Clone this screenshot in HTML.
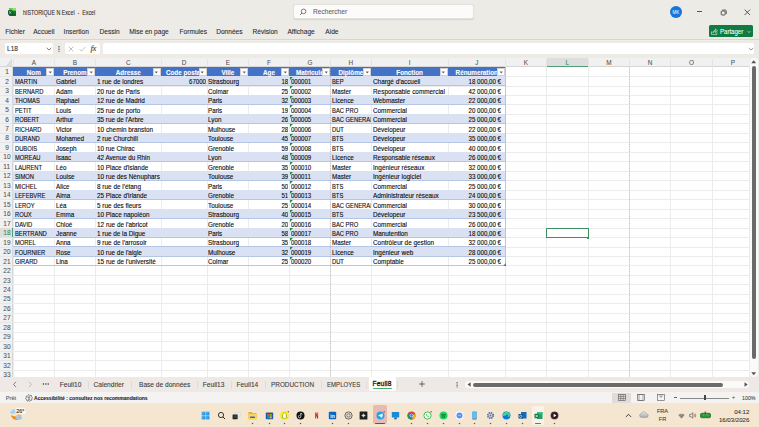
<!DOCTYPE html><html><head><meta charset="utf-8"><style>
*{margin:0;padding:0;box-sizing:border-box}
html,body{width:759px;height:427px;overflow:hidden;background:#efeae6;font-family:"Liberation Sans",sans-serif}
.ab{position:absolute}
.t{position:absolute;white-space:nowrap;line-height:1;-webkit-text-stroke:0.08px currentColor}
.cell{position:absolute;white-space:nowrap;overflow:hidden;font-size:6.45px;line-height:1;height:9px;color:#0a0a0a;-webkit-text-stroke:0.11px currentColor}
</style></head><body>

<div class="ab" style="left:0;top:0;width:759px;height:57.6px;background:linear-gradient(90deg,#efeae6 0px,#eeebe7 150px,#ecebe6 300px,#ecebe6 759px)"></div>
<svg class="ab" style="left:7.6px;top:7.9px" width="8" height="8" viewBox="0 0 8 8">
<rect x="1.2" y="0" width="6.8" height="8" rx="0.9" fill="#0f7a35"/>
<rect x="1.2" y="0" width="6.8" height="2.6" rx="0.9" fill="#5ccf4e"/>
<rect x="4.6" y="0" width="3.4" height="2.6" rx="0.6" fill="#9be36c"/>
<rect x="1.2" y="5.3" width="6.8" height="2.7" rx="0.9" fill="#0b6a2c"/>
<rect x="0" y="2.3" width="4.4" height="4.4" rx="0.6" fill="#0a5427"/>
<path d="M1.2 3.3 L3.2 5.7 M3.2 3.3 L1.2 5.7" stroke="#e8f5ec" stroke-width="0.7"/>
</svg>
<div class="t" style="left:23px;top:9.6px;font-size:6.3px;transform:scaleX(0.84);transform-origin:0 0;color:#2b2b2b">hISTORIQUE N Excel&nbsp; -&nbsp; Excel</div>
<div class="ab" style="left:292.6px;top:3.9px;width:181.6px;height:15.5px;background:#fcfbfa;border:0.5px solid #e4e1de;border-radius:2.5px;box-shadow:0 0.6px 0.8px rgba(0,0,0,0.10)"></div>
<svg class="ab" style="left:299px;top:8px" width="8" height="8" viewBox="0 0 8 8"><circle cx="4.6" cy="3.4" r="2.3" fill="none" stroke="#5a5a5a" stroke-width="0.8"/><line x1="3" y1="5" x2="1" y2="7" stroke="#5a5a5a" stroke-width="0.8"/></svg>
<div class="t" style="left:313px;top:9.1px;font-size:6.6px;color:#5f5f5f">Rechercher</div>
<div class="ab" style="left:669.8px;top:5.9px;width:12.2px;height:12.2px;border-radius:50%;background:#1a73d9"></div>
<div class="t" style="left:669.8px;top:10.5px;width:12.2px;text-align:center;font-size:4.5px;color:#fff;-webkit-text-stroke:0">MK</div>
<div class="ab" style="left:697.2px;top:11.3px;width:4.8px;height:0.6px;background:#555"></div>
<svg class="ab" style="left:719px;top:8px" width="9" height="9" viewBox="0 0 9 9"><rect x="2.2" y="3" width="4" height="4" rx="0.8" fill="none" stroke="#333" stroke-width="0.8"/><path d="M3.3 2 H6.3 a1 1 0 0 1 1 1 V6" fill="none" stroke="#333" stroke-width="0.7"/></svg>
<svg class="ab" style="left:743px;top:8px" width="9" height="9" viewBox="0 0 9 9"><path d="M1.6 1.6 L7 7 M7 1.6 L1.6 7" stroke="#333" stroke-width="0.8"/></svg>
<div class="t" style="left:5.2px;top:28.9px;font-size:6.6px;color:#2a2a2a">Fichier</div>
<div class="t" style="left:33.2px;top:28.9px;font-size:6.6px;color:#2a2a2a">Accueil</div>
<div class="t" style="left:63.6px;top:28.9px;font-size:6.6px;color:#2a2a2a">Insertion</div>
<div class="t" style="left:99.6px;top:28.9px;font-size:6.6px;color:#2a2a2a">Dessin</div>
<div class="t" style="left:129.2px;top:28.9px;font-size:6.6px;color:#2a2a2a">Mise en page</div>
<div class="t" style="left:179.5px;top:28.9px;font-size:6.6px;color:#2a2a2a">Formules</div>
<div class="t" style="left:216.2px;top:28.9px;font-size:6.6px;color:#2a2a2a">Données</div>
<div class="t" style="left:252.5px;top:28.9px;font-size:6.6px;color:#2a2a2a">Révision</div>
<div class="t" style="left:287.4px;top:28.9px;font-size:6.6px;color:#2a2a2a">Affichage</div>
<div class="t" style="left:325.3px;top:28.9px;font-size:6.6px;color:#2a2a2a">Aide</div>
<div class="ab" style="left:709.3px;top:25.4px;width:43.6px;height:11.4px;background:#107c41;border-radius:1.5px"></div>
<svg class="ab" style="left:711px;top:27.6px" width="7" height="7" viewBox="0 0 7 7"><path d="M0.5 3.5 V6.4 H6 V4.6 M2 4.8 C2 3.2 3 2.3 4.5 2.3 V1 L6.5 2.8 L4.5 4.6 V3.4 C3.3 3.4 2.6 3.9 2 4.8Z" fill="none" stroke="#fff" stroke-width="0.55"/></svg>
<div class="t" style="left:719.7px;top:28.5px;font-size:6.5px;color:#fff;transform:scaleX(0.93);transform-origin:0 0">Partager</div>
<svg class="ab" style="left:747px;top:29.5px" width="4" height="4" viewBox="0 0 4 4"><path d="M0.6 1.2 L2 2.6 L3.4 1.2" fill="none" stroke="#fff" stroke-width="0.6"/></svg>
<div class="ab" style="left:0;top:38.5px;width:759px;height:1px;background:#d9d6d2"></div>
<div class="ab" style="left:4.7px;top:43.1px;width:48.6px;height:10.8px;background:#fff;border-radius:1.5px"></div>
<div class="t" style="left:7.1px;top:45.6px;font-size:6.5px;color:#2a2a2a">L18</div>
<svg class="ab" style="left:46px;top:46.8px" width="6" height="4" viewBox="0 0 6 4"><path d="M0.6 0.8 L3 3 L5.4 0.8" fill="none" stroke="#444" stroke-width="0.7"/></svg>
<svg class="ab" style="left:58px;top:45.8px" width="2" height="6" viewBox="0 0 2 6"><path d="M1 0 V6" stroke="#7a7a7a" stroke-width="1.5" stroke-dasharray="1 0.55"/></svg>
<div class="ab" style="left:64.8px;top:43.1px;width:35.1px;height:10.8px;background:#fff;border-radius:1.5px"></div>
<svg class="ab" style="left:67.5px;top:45.5px" width="6" height="6" viewBox="0 0 6 6"><path d="M0.6 0.6 L5.4 5.4 M5.4 0.6 L0.6 5.4" stroke="#999" stroke-width="0.6"/></svg>
<svg class="ab" style="left:78.8px;top:45.5px" width="7" height="6" viewBox="0 0 7 6"><path d="M0.6 3.2 L2.5 5.2 L6.4 0.8" fill="none" stroke="#999" stroke-width="0.6"/></svg>
<div class="t" style="left:90.6px;top:44.2px;font-size:8.6px;color:#333;font-family:'Liberation Serif',serif;font-style:italic;letter-spacing:-0.4px">fx</div>
<div class="ab" style="left:102.8px;top:43.3px;width:651.4px;height:10.9px;background:#fff;border-radius:1.5px"></div>
<svg class="ab" style="left:747.8px;top:46.5px" width="6" height="4" viewBox="0 0 6 4"><path d="M0.8 1 L3 3 L5.2 1" fill="none" stroke="#555" stroke-width="0.6"/></svg>
<div class="ab" style="left:0;top:57.6px;width:749.3px;height:319.4px;background:#fff"></div>
<div class="ab" style="left:0;top:57.6px;width:749.3px;height:9.399999999999999px;background:#f1f1f1;border-bottom:0.8px solid #d6d6d6"></div>
<div class="ab" style="left:0;top:67.0px;width:13.2px;height:310.0px;background:#f1f1f1;border-right:0.8px solid #d6d6d6"></div>
<svg class="ab" style="left:0;top:57.6px" width="13" height="10" viewBox="0 0 13 10"><path d="M12 0.3 L12 8.2 L5.8 8.2 Z" fill="#dcdcdc"/></svg>
<div class="ab" style="left:12.80px;top:67.0px;width:0.8px;height:310.0px;background:#ececec"></div>
<div class="ab" style="left:12.80px;top:59.1px;width:0.6px;height:7.899999999999999px;background:#e4e4e4"></div>
<div class="ab" style="left:54.00px;top:67.0px;width:0.8px;height:310.0px;background:#ececec"></div>
<div class="ab" style="left:54.00px;top:59.1px;width:0.6px;height:7.899999999999999px;background:#e4e4e4"></div>
<div class="ab" style="left:95.10px;top:67.0px;width:0.8px;height:310.0px;background:#ececec"></div>
<div class="ab" style="left:95.10px;top:59.1px;width:0.6px;height:7.899999999999999px;background:#e4e4e4"></div>
<div class="ab" style="left:160.60px;top:67.0px;width:0.8px;height:310.0px;background:#ececec"></div>
<div class="ab" style="left:160.60px;top:59.1px;width:0.6px;height:7.899999999999999px;background:#e4e4e4"></div>
<div class="ab" style="left:206.60px;top:67.0px;width:0.8px;height:310.0px;background:#ececec"></div>
<div class="ab" style="left:206.60px;top:59.1px;width:0.6px;height:7.899999999999999px;background:#e4e4e4"></div>
<div class="ab" style="left:248.35px;top:67.0px;width:0.8px;height:310.0px;background:#ececec"></div>
<div class="ab" style="left:248.35px;top:59.1px;width:0.6px;height:7.899999999999999px;background:#e4e4e4"></div>
<div class="ab" style="left:288.85px;top:67.0px;width:0.8px;height:310.0px;background:#ececec"></div>
<div class="ab" style="left:288.85px;top:59.1px;width:0.6px;height:7.899999999999999px;background:#e4e4e4"></div>
<div class="ab" style="left:330.10px;top:67.0px;width:0.8px;height:310.0px;background:#ececec"></div>
<div class="ab" style="left:330.10px;top:59.1px;width:0.6px;height:7.899999999999999px;background:#e4e4e4"></div>
<div class="ab" style="left:370.85px;top:67.0px;width:0.8px;height:310.0px;background:#ececec"></div>
<div class="ab" style="left:370.85px;top:59.1px;width:0.6px;height:7.899999999999999px;background:#e4e4e4"></div>
<div class="ab" style="left:447.60px;top:67.0px;width:0.8px;height:310.0px;background:#ececec"></div>
<div class="ab" style="left:447.60px;top:59.1px;width:0.6px;height:7.899999999999999px;background:#e4e4e4"></div>
<div class="ab" style="left:505.10px;top:67.0px;width:0.8px;height:310.0px;background:#ececec"></div>
<div class="ab" style="left:505.10px;top:59.1px;width:0.6px;height:7.899999999999999px;background:#e4e4e4"></div>
<div class="ab" style="left:546.10px;top:67.0px;width:0.8px;height:310.0px;background:#ececec"></div>
<div class="ab" style="left:546.10px;top:59.1px;width:0.6px;height:7.899999999999999px;background:#e4e4e4"></div>
<div class="ab" style="left:587.90px;top:67.0px;width:0.8px;height:310.0px;background:#ececec"></div>
<div class="ab" style="left:587.90px;top:59.1px;width:0.6px;height:7.899999999999999px;background:#e4e4e4"></div>
<div class="ab" style="left:628.90px;top:67.0px;width:0.8px;height:310.0px;background:#ececec"></div>
<div class="ab" style="left:628.90px;top:59.1px;width:0.6px;height:7.899999999999999px;background:#e4e4e4"></div>
<div class="ab" style="left:670.40px;top:67.0px;width:0.8px;height:310.0px;background:#ececec"></div>
<div class="ab" style="left:670.40px;top:59.1px;width:0.6px;height:7.899999999999999px;background:#e4e4e4"></div>
<div class="ab" style="left:711.90px;top:67.0px;width:0.8px;height:310.0px;background:#ececec"></div>
<div class="ab" style="left:711.90px;top:59.1px;width:0.6px;height:7.899999999999999px;background:#e4e4e4"></div>
<div class="ab" style="left:13.2px;top:76.07px;width:736.10px;height:0.8px;background:#ececec"></div>
<div class="ab" style="left:0;top:76.07px;width:13.2px;height:0.8px;background:#e6e6e6"></div>
<div class="ab" style="left:13.2px;top:85.54px;width:736.10px;height:0.8px;background:#ececec"></div>
<div class="ab" style="left:0;top:85.54px;width:13.2px;height:0.8px;background:#e6e6e6"></div>
<div class="ab" style="left:13.2px;top:95.01px;width:736.10px;height:0.8px;background:#ececec"></div>
<div class="ab" style="left:0;top:95.01px;width:13.2px;height:0.8px;background:#e6e6e6"></div>
<div class="ab" style="left:13.2px;top:104.48px;width:736.10px;height:0.8px;background:#ececec"></div>
<div class="ab" style="left:0;top:104.48px;width:13.2px;height:0.8px;background:#e6e6e6"></div>
<div class="ab" style="left:13.2px;top:113.95px;width:736.10px;height:0.8px;background:#ececec"></div>
<div class="ab" style="left:0;top:113.95px;width:13.2px;height:0.8px;background:#e6e6e6"></div>
<div class="ab" style="left:13.2px;top:123.42px;width:736.10px;height:0.8px;background:#ececec"></div>
<div class="ab" style="left:0;top:123.42px;width:13.2px;height:0.8px;background:#e6e6e6"></div>
<div class="ab" style="left:13.2px;top:132.89px;width:736.10px;height:0.8px;background:#ececec"></div>
<div class="ab" style="left:0;top:132.89px;width:13.2px;height:0.8px;background:#e6e6e6"></div>
<div class="ab" style="left:13.2px;top:142.36px;width:736.10px;height:0.8px;background:#ececec"></div>
<div class="ab" style="left:0;top:142.36px;width:13.2px;height:0.8px;background:#e6e6e6"></div>
<div class="ab" style="left:13.2px;top:151.83px;width:736.10px;height:0.8px;background:#ececec"></div>
<div class="ab" style="left:0;top:151.83px;width:13.2px;height:0.8px;background:#e6e6e6"></div>
<div class="ab" style="left:13.2px;top:161.30px;width:736.10px;height:0.8px;background:#ececec"></div>
<div class="ab" style="left:0;top:161.30px;width:13.2px;height:0.8px;background:#e6e6e6"></div>
<div class="ab" style="left:13.2px;top:170.77px;width:736.10px;height:0.8px;background:#ececec"></div>
<div class="ab" style="left:0;top:170.77px;width:13.2px;height:0.8px;background:#e6e6e6"></div>
<div class="ab" style="left:13.2px;top:180.24px;width:736.10px;height:0.8px;background:#ececec"></div>
<div class="ab" style="left:0;top:180.24px;width:13.2px;height:0.8px;background:#e6e6e6"></div>
<div class="ab" style="left:13.2px;top:189.71px;width:736.10px;height:0.8px;background:#ececec"></div>
<div class="ab" style="left:0;top:189.71px;width:13.2px;height:0.8px;background:#e6e6e6"></div>
<div class="ab" style="left:13.2px;top:199.18px;width:736.10px;height:0.8px;background:#ececec"></div>
<div class="ab" style="left:0;top:199.18px;width:13.2px;height:0.8px;background:#e6e6e6"></div>
<div class="ab" style="left:13.2px;top:208.65px;width:736.10px;height:0.8px;background:#ececec"></div>
<div class="ab" style="left:0;top:208.65px;width:13.2px;height:0.8px;background:#e6e6e6"></div>
<div class="ab" style="left:13.2px;top:218.12px;width:736.10px;height:0.8px;background:#ececec"></div>
<div class="ab" style="left:0;top:218.12px;width:13.2px;height:0.8px;background:#e6e6e6"></div>
<div class="ab" style="left:13.2px;top:227.59px;width:736.10px;height:0.8px;background:#ececec"></div>
<div class="ab" style="left:0;top:227.59px;width:13.2px;height:0.8px;background:#e6e6e6"></div>
<div class="ab" style="left:13.2px;top:237.06px;width:736.10px;height:0.8px;background:#ececec"></div>
<div class="ab" style="left:0;top:237.06px;width:13.2px;height:0.8px;background:#e6e6e6"></div>
<div class="ab" style="left:13.2px;top:246.53px;width:736.10px;height:0.8px;background:#ececec"></div>
<div class="ab" style="left:0;top:246.53px;width:13.2px;height:0.8px;background:#e6e6e6"></div>
<div class="ab" style="left:13.2px;top:256.00px;width:736.10px;height:0.8px;background:#ececec"></div>
<div class="ab" style="left:0;top:256.00px;width:13.2px;height:0.8px;background:#e6e6e6"></div>
<div class="ab" style="left:13.2px;top:265.47px;width:736.10px;height:0.8px;background:#ececec"></div>
<div class="ab" style="left:0;top:265.47px;width:13.2px;height:0.8px;background:#e6e6e6"></div>
<div class="ab" style="left:13.2px;top:274.94px;width:736.10px;height:0.8px;background:#ececec"></div>
<div class="ab" style="left:0;top:274.94px;width:13.2px;height:0.8px;background:#e6e6e6"></div>
<div class="ab" style="left:13.2px;top:284.41px;width:736.10px;height:0.8px;background:#ececec"></div>
<div class="ab" style="left:0;top:284.41px;width:13.2px;height:0.8px;background:#e6e6e6"></div>
<div class="ab" style="left:13.2px;top:293.88px;width:736.10px;height:0.8px;background:#ececec"></div>
<div class="ab" style="left:0;top:293.88px;width:13.2px;height:0.8px;background:#e6e6e6"></div>
<div class="ab" style="left:13.2px;top:303.35px;width:736.10px;height:0.8px;background:#ececec"></div>
<div class="ab" style="left:0;top:303.35px;width:13.2px;height:0.8px;background:#e6e6e6"></div>
<div class="ab" style="left:13.2px;top:312.82px;width:736.10px;height:0.8px;background:#ececec"></div>
<div class="ab" style="left:0;top:312.82px;width:13.2px;height:0.8px;background:#e6e6e6"></div>
<div class="ab" style="left:13.2px;top:322.29px;width:736.10px;height:0.8px;background:#ececec"></div>
<div class="ab" style="left:0;top:322.29px;width:13.2px;height:0.8px;background:#e6e6e6"></div>
<div class="ab" style="left:13.2px;top:331.76px;width:736.10px;height:0.8px;background:#ececec"></div>
<div class="ab" style="left:0;top:331.76px;width:13.2px;height:0.8px;background:#e6e6e6"></div>
<div class="ab" style="left:13.2px;top:341.23px;width:736.10px;height:0.8px;background:#ececec"></div>
<div class="ab" style="left:0;top:341.23px;width:13.2px;height:0.8px;background:#e6e6e6"></div>
<div class="ab" style="left:13.2px;top:350.70px;width:736.10px;height:0.8px;background:#ececec"></div>
<div class="ab" style="left:0;top:350.70px;width:13.2px;height:0.8px;background:#e6e6e6"></div>
<div class="ab" style="left:13.2px;top:360.17px;width:736.10px;height:0.8px;background:#ececec"></div>
<div class="ab" style="left:0;top:360.17px;width:13.2px;height:0.8px;background:#e6e6e6"></div>
<div class="ab" style="left:13.2px;top:369.64px;width:736.10px;height:0.8px;background:#ececec"></div>
<div class="ab" style="left:0;top:369.64px;width:13.2px;height:0.8px;background:#e6e6e6"></div>
<div class="t" style="left:13.2px;top:59.9px;width:41.20px;text-align:center;font-size:6.4px;color:#555">A</div>
<div class="t" style="left:54.4px;top:59.9px;width:41.10px;text-align:center;font-size:6.4px;color:#555">B</div>
<div class="t" style="left:95.5px;top:59.9px;width:65.50px;text-align:center;font-size:6.4px;color:#555">C</div>
<div class="t" style="left:161.0px;top:59.9px;width:46.00px;text-align:center;font-size:6.4px;color:#555">D</div>
<div class="t" style="left:207.0px;top:59.9px;width:41.75px;text-align:center;font-size:6.4px;color:#555">E</div>
<div class="t" style="left:248.75px;top:59.9px;width:40.50px;text-align:center;font-size:6.4px;color:#555">F</div>
<div class="t" style="left:289.25px;top:59.9px;width:41.25px;text-align:center;font-size:6.4px;color:#555">G</div>
<div class="t" style="left:330.5px;top:59.9px;width:40.75px;text-align:center;font-size:6.4px;color:#555">H</div>
<div class="t" style="left:371.25px;top:59.9px;width:76.75px;text-align:center;font-size:6.4px;color:#555">I</div>
<div class="t" style="left:448.0px;top:59.9px;width:57.50px;text-align:center;font-size:6.4px;color:#555">J</div>
<div class="t" style="left:505.5px;top:59.9px;width:41.00px;text-align:center;font-size:6.4px;color:#555">K</div>
<div class="ab" style="left:546.5px;top:57.6px;width:41.80px;height:9.399999999999999px;background:#dedede;border-bottom:1.5px solid #4f9f73"></div>
<div class="t" style="left:546.5px;top:59.9px;width:41.80px;text-align:center;font-size:6.4px;color:#2f8a58">L</div>
<div class="t" style="left:588.3px;top:59.9px;width:41.00px;text-align:center;font-size:6.4px;color:#555">M</div>
<div class="t" style="left:629.3px;top:59.9px;width:41.50px;text-align:center;font-size:6.4px;color:#555">N</div>
<div class="t" style="left:670.8px;top:59.9px;width:41.50px;text-align:center;font-size:6.4px;color:#555">O</div>
<div class="t" style="left:712.3px;top:59.9px;width:41.20px;text-align:center;font-size:6.4px;color:#555">P</div>
<div class="t" style="left:0;top:69.20px;width:13.70px;text-align:center;font-size:7.1px;color:#555"><span style="display:inline-block;transform:scaleX(0.92)">1</span></div>
<div class="t" style="left:0;top:78.67px;width:13.70px;text-align:center;font-size:7.1px;color:#555"><span style="display:inline-block;transform:scaleX(0.92)">2</span></div>
<div class="t" style="left:0;top:88.14px;width:13.70px;text-align:center;font-size:7.1px;color:#555"><span style="display:inline-block;transform:scaleX(0.92)">3</span></div>
<div class="t" style="left:0;top:97.61px;width:13.70px;text-align:center;font-size:7.1px;color:#555"><span style="display:inline-block;transform:scaleX(0.92)">4</span></div>
<div class="t" style="left:0;top:107.08px;width:13.70px;text-align:center;font-size:7.1px;color:#555"><span style="display:inline-block;transform:scaleX(0.92)">5</span></div>
<div class="t" style="left:0;top:116.55px;width:13.70px;text-align:center;font-size:7.1px;color:#555"><span style="display:inline-block;transform:scaleX(0.92)">6</span></div>
<div class="t" style="left:0;top:126.02px;width:13.70px;text-align:center;font-size:7.1px;color:#555"><span style="display:inline-block;transform:scaleX(0.92)">7</span></div>
<div class="t" style="left:0;top:135.49px;width:13.70px;text-align:center;font-size:7.1px;color:#555"><span style="display:inline-block;transform:scaleX(0.92)">8</span></div>
<div class="t" style="left:0;top:144.96px;width:13.70px;text-align:center;font-size:7.1px;color:#555"><span style="display:inline-block;transform:scaleX(0.92)">9</span></div>
<div class="t" style="left:0;top:154.43px;width:13.70px;text-align:center;font-size:7.1px;color:#555"><span style="display:inline-block;transform:scaleX(0.92)">10</span></div>
<div class="t" style="left:0;top:163.90px;width:13.70px;text-align:center;font-size:7.1px;color:#555"><span style="display:inline-block;transform:scaleX(0.92)">11</span></div>
<div class="t" style="left:0;top:173.37px;width:13.70px;text-align:center;font-size:7.1px;color:#555"><span style="display:inline-block;transform:scaleX(0.92)">12</span></div>
<div class="t" style="left:0;top:182.84px;width:13.70px;text-align:center;font-size:7.1px;color:#555"><span style="display:inline-block;transform:scaleX(0.92)">13</span></div>
<div class="t" style="left:0;top:192.31px;width:13.70px;text-align:center;font-size:7.1px;color:#555"><span style="display:inline-block;transform:scaleX(0.92)">14</span></div>
<div class="t" style="left:0;top:201.78px;width:13.70px;text-align:center;font-size:7.1px;color:#555"><span style="display:inline-block;transform:scaleX(0.92)">15</span></div>
<div class="t" style="left:0;top:211.25px;width:13.70px;text-align:center;font-size:7.1px;color:#555"><span style="display:inline-block;transform:scaleX(0.92)">16</span></div>
<div class="t" style="left:0;top:220.72px;width:13.70px;text-align:center;font-size:7.1px;color:#555"><span style="display:inline-block;transform:scaleX(0.92)">17</span></div>
<div class="ab" style="left:0;top:227.99px;width:13.2px;height:9.47px;background:#dedede;border-right:1.6px solid #4f9f73"></div>
<div class="t" style="left:0;top:230.19px;width:13.70px;text-align:center;font-size:7.1px;color:#2f8a58"><span style="display:inline-block;transform:scaleX(0.92)">18</span></div>
<div class="t" style="left:0;top:239.66px;width:13.70px;text-align:center;font-size:7.1px;color:#555"><span style="display:inline-block;transform:scaleX(0.92)">19</span></div>
<div class="t" style="left:0;top:249.13px;width:13.70px;text-align:center;font-size:7.1px;color:#555"><span style="display:inline-block;transform:scaleX(0.92)">20</span></div>
<div class="t" style="left:0;top:258.60px;width:13.70px;text-align:center;font-size:7.1px;color:#555"><span style="display:inline-block;transform:scaleX(0.92)">21</span></div>
<div class="t" style="left:0;top:268.07px;width:13.70px;text-align:center;font-size:7.1px;color:#555"><span style="display:inline-block;transform:scaleX(0.92)">22</span></div>
<div class="t" style="left:0;top:277.54px;width:13.70px;text-align:center;font-size:7.1px;color:#555"><span style="display:inline-block;transform:scaleX(0.92)">23</span></div>
<div class="t" style="left:0;top:287.01px;width:13.70px;text-align:center;font-size:7.1px;color:#555"><span style="display:inline-block;transform:scaleX(0.92)">24</span></div>
<div class="t" style="left:0;top:296.48px;width:13.70px;text-align:center;font-size:7.1px;color:#555"><span style="display:inline-block;transform:scaleX(0.92)">25</span></div>
<div class="t" style="left:0;top:305.95px;width:13.70px;text-align:center;font-size:7.1px;color:#555"><span style="display:inline-block;transform:scaleX(0.92)">26</span></div>
<div class="t" style="left:0;top:315.42px;width:13.70px;text-align:center;font-size:7.1px;color:#555"><span style="display:inline-block;transform:scaleX(0.92)">27</span></div>
<div class="t" style="left:0;top:324.89px;width:13.70px;text-align:center;font-size:7.1px;color:#555"><span style="display:inline-block;transform:scaleX(0.92)">28</span></div>
<div class="t" style="left:0;top:334.36px;width:13.70px;text-align:center;font-size:7.1px;color:#555"><span style="display:inline-block;transform:scaleX(0.92)">29</span></div>
<div class="t" style="left:0;top:343.83px;width:13.70px;text-align:center;font-size:7.1px;color:#555"><span style="display:inline-block;transform:scaleX(0.92)">30</span></div>
<div class="t" style="left:0;top:353.30px;width:13.70px;text-align:center;font-size:7.1px;color:#555"><span style="display:inline-block;transform:scaleX(0.92)">31</span></div>
<div class="t" style="left:0;top:362.77px;width:13.70px;text-align:center;font-size:7.1px;color:#555"><span style="display:inline-block;transform:scaleX(0.92)">32</span></div>
<div class="t" style="left:0;top:372.24px;width:13.70px;text-align:center;font-size:7.1px;color:#555"><span style="display:inline-block;transform:scaleX(0.92)">33</span></div>
<div class="ab" style="left:13.2px;top:67.0px;width:492.30px;height:9.47px;background:#4472c4"></div>
<div class="ab" style="left:13.2px;top:76.47px;width:492.30px;height:9.47px;background:#d9e1f2"></div>
<div class="ab" style="left:13.2px;top:85.49px;width:492.30px;height:0.9px;background:#b4c6e7"></div>
<div class="ab" style="left:13.2px;top:94.96px;width:492.30px;height:0.9px;background:#b4c6e7"></div>
<div class="ab" style="left:13.2px;top:95.41px;width:492.30px;height:9.47px;background:#d9e1f2"></div>
<div class="ab" style="left:13.2px;top:104.43px;width:492.30px;height:0.9px;background:#b4c6e7"></div>
<div class="ab" style="left:13.2px;top:113.90px;width:492.30px;height:0.9px;background:#b4c6e7"></div>
<div class="ab" style="left:13.2px;top:114.35px;width:492.30px;height:9.47px;background:#d9e1f2"></div>
<div class="ab" style="left:13.2px;top:123.37px;width:492.30px;height:0.9px;background:#b4c6e7"></div>
<div class="ab" style="left:13.2px;top:132.84px;width:492.30px;height:0.9px;background:#b4c6e7"></div>
<div class="ab" style="left:13.2px;top:133.29000000000002px;width:492.30px;height:9.47px;background:#d9e1f2"></div>
<div class="ab" style="left:13.2px;top:142.31px;width:492.30px;height:0.9px;background:#b4c6e7"></div>
<div class="ab" style="left:13.2px;top:151.78px;width:492.30px;height:0.9px;background:#b4c6e7"></div>
<div class="ab" style="left:13.2px;top:152.23000000000002px;width:492.30px;height:9.47px;background:#d9e1f2"></div>
<div class="ab" style="left:13.2px;top:161.25px;width:492.30px;height:0.9px;background:#b4c6e7"></div>
<div class="ab" style="left:13.2px;top:170.72px;width:492.30px;height:0.9px;background:#b4c6e7"></div>
<div class="ab" style="left:13.2px;top:171.17000000000002px;width:492.30px;height:9.47px;background:#d9e1f2"></div>
<div class="ab" style="left:13.2px;top:180.19px;width:492.30px;height:0.9px;background:#b4c6e7"></div>
<div class="ab" style="left:13.2px;top:189.66px;width:492.30px;height:0.9px;background:#b4c6e7"></div>
<div class="ab" style="left:13.2px;top:190.11px;width:492.30px;height:9.47px;background:#d9e1f2"></div>
<div class="ab" style="left:13.2px;top:199.13px;width:492.30px;height:0.9px;background:#b4c6e7"></div>
<div class="ab" style="left:13.2px;top:208.60px;width:492.30px;height:0.9px;background:#b4c6e7"></div>
<div class="ab" style="left:13.2px;top:209.05px;width:492.30px;height:9.47px;background:#d9e1f2"></div>
<div class="ab" style="left:13.2px;top:218.07px;width:492.30px;height:0.9px;background:#b4c6e7"></div>
<div class="ab" style="left:13.2px;top:227.54px;width:492.30px;height:0.9px;background:#b4c6e7"></div>
<div class="ab" style="left:13.2px;top:227.99px;width:492.30px;height:9.47px;background:#d9e1f2"></div>
<div class="ab" style="left:13.2px;top:237.01px;width:492.30px;height:0.9px;background:#b4c6e7"></div>
<div class="ab" style="left:13.2px;top:246.48px;width:492.30px;height:0.9px;background:#b4c6e7"></div>
<div class="ab" style="left:13.2px;top:246.93px;width:492.30px;height:9.47px;background:#d9e1f2"></div>
<div class="ab" style="left:13.2px;top:255.95px;width:492.30px;height:0.9px;background:#b4c6e7"></div>
<div class="ab" style="left:13.2px;top:265.42px;width:492.30px;height:0.9px;background:#b4c6e7"></div>
<div class="ab" style="left:505.00px;top:67.0px;width:0.9px;height:198.87px;background:#b4c6e7"></div>
<div class="cell" style="left:13.2px;top:70.00px;width:41.20px;text-align:center;font-weight:bold;color:#fff;font-size:6.3px">Nom</div>
<div class="ab" style="left:46.10px;top:67.80px;width:7.9px;height:7.9px;background:#fff;border:0.5px solid #d0d0d0"></div>
<svg class="ab" style="left:47.80px;top:70.60px" width="4.5" height="3" viewBox="0 0 4.5 3"><path d="M0.6 0.5 H3.9 L2.25 2.4Z" fill="#666"/></svg>
<div class="cell" style="left:54.4px;top:70.00px;width:41.10px;text-align:center;font-weight:bold;color:#fff;font-size:6.3px">Prenom</div>
<div class="ab" style="left:87.20px;top:67.80px;width:7.9px;height:7.9px;background:#fff;border:0.5px solid #d0d0d0"></div>
<svg class="ab" style="left:88.90px;top:70.60px" width="4.5" height="3" viewBox="0 0 4.5 3"><path d="M0.6 0.5 H3.9 L2.25 2.4Z" fill="#666"/></svg>
<div class="cell" style="left:95.5px;top:70.00px;width:65.50px;text-align:center;font-weight:bold;color:#fff;font-size:6.3px">Adresse</div>
<div class="ab" style="left:152.70px;top:67.80px;width:7.9px;height:7.9px;background:#fff;border:0.5px solid #d0d0d0"></div>
<svg class="ab" style="left:154.40px;top:70.60px" width="4.5" height="3" viewBox="0 0 4.5 3"><path d="M0.6 0.5 H3.9 L2.25 2.4Z" fill="#666"/></svg>
<div class="cell" style="left:161.0px;top:70.00px;width:46.00px;text-align:center;font-weight:bold;color:#fff;font-size:6.3px">Code postal</div>
<div class="ab" style="left:198.70px;top:67.80px;width:7.9px;height:7.9px;background:#fff;border:0.5px solid #d0d0d0"></div>
<svg class="ab" style="left:200.40px;top:70.60px" width="4.5" height="3" viewBox="0 0 4.5 3"><path d="M0.6 0.5 H3.9 L2.25 2.4Z" fill="#666"/></svg>
<div class="cell" style="left:207.0px;top:70.00px;width:41.75px;text-align:center;font-weight:bold;color:#fff;font-size:6.3px">Ville</div>
<div class="ab" style="left:240.45px;top:67.80px;width:7.9px;height:7.9px;background:#fff;border:0.5px solid #d0d0d0"></div>
<svg class="ab" style="left:242.15px;top:70.60px" width="4.5" height="3" viewBox="0 0 4.5 3"><path d="M0.6 0.5 H3.9 L2.25 2.4Z" fill="#666"/></svg>
<div class="cell" style="left:248.75px;top:70.00px;width:40.50px;text-align:center;font-weight:bold;color:#fff;font-size:6.3px">Age</div>
<div class="ab" style="left:280.95px;top:67.80px;width:7.9px;height:7.9px;background:#fff;border:0.5px solid #d0d0d0"></div>
<svg class="ab" style="left:282.65px;top:70.60px" width="4.5" height="3" viewBox="0 0 4.5 3"><path d="M0.6 0.5 H3.9 L2.25 2.4Z" fill="#666"/></svg>
<div class="cell" style="left:289.25px;top:70.00px;width:41.25px;text-align:center;font-weight:bold;color:#fff;font-size:6.3px">Matricule</div>
<div class="ab" style="left:322.20px;top:67.80px;width:7.9px;height:7.9px;background:#fff;border:0.5px solid #d0d0d0"></div>
<svg class="ab" style="left:323.90px;top:70.60px" width="4.5" height="3" viewBox="0 0 4.5 3"><path d="M0.6 0.5 H3.9 L2.25 2.4Z" fill="#666"/></svg>
<div class="cell" style="left:330.5px;top:70.00px;width:40.75px;text-align:center;font-weight:bold;color:#fff;font-size:6.3px">Diplôme</div>
<div class="ab" style="left:362.95px;top:67.80px;width:7.9px;height:7.9px;background:#fff;border:0.5px solid #d0d0d0"></div>
<svg class="ab" style="left:364.65px;top:70.60px" width="4.5" height="3" viewBox="0 0 4.5 3"><path d="M0.6 0.5 H3.9 L2.25 2.4Z" fill="#666"/></svg>
<div class="cell" style="left:371.25px;top:70.00px;width:76.75px;text-align:center;font-weight:bold;color:#fff;font-size:6.3px">Fonction</div>
<div class="ab" style="left:439.70px;top:67.80px;width:7.9px;height:7.9px;background:#fff;border:0.5px solid #d0d0d0"></div>
<svg class="ab" style="left:441.40px;top:70.60px" width="4.5" height="3" viewBox="0 0 4.5 3"><path d="M0.6 0.5 H3.9 L2.25 2.4Z" fill="#666"/></svg>
<div class="cell" style="left:448.0px;top:70.00px;width:57.50px;text-align:center;font-weight:bold;color:#fff;font-size:6.3px">Rénumeration</div>
<div class="ab" style="left:497.20px;top:67.80px;width:7.9px;height:7.9px;background:#fff;border:0.5px solid #d0d0d0"></div>
<svg class="ab" style="left:498.90px;top:70.60px" width="4.5" height="3" viewBox="0 0 4.5 3"><path d="M0.6 0.5 H3.9 L2.25 2.4Z" fill="#666"/></svg>
<div class="cell" style="left:14.60px;top:79.47px;width:39.40px"><span style="display:inline-block;transform:scaleX(0.900);transform-origin:0 0">MARTIN</span></div>
<div class="cell" style="left:55.80px;top:79.47px;width:39.30px"><span style="display:inline-block;transform:scaleX(0.976);transform-origin:0 0">Gabriel</span></div>
<div class="cell" style="left:96.90px;top:79.47px;width:63.70px"><span style="display:inline-block;transform:scaleX(0.995);transform-origin:0 0">1 rue de londres</span></div>
<div class="cell" style="left:161.0px;top:79.47px;width:44.70px;text-align:right"><span style="display:inline-block;transform:scaleX(0.940);transform-origin:100% 0">67000</span></div>
<div class="cell" style="left:208.40px;top:79.47px;width:39.95px"><span style="display:inline-block;transform:scaleX(0.986);transform-origin:0 0">Strasbourg</span></div>
<div class="cell" style="left:248.75px;top:79.47px;width:39.20px;text-align:right"><span style="display:inline-block;transform:scaleX(0.940);transform-origin:100% 0">18</span></div>
<div class="cell" style="left:290.65px;top:79.47px;width:39.45px"><span style="display:inline-block;transform:scaleX(0.940);transform-origin:0 0">000001</span></div>
<svg class="ab" style="left:289.65px;top:76.97px" width="3" height="3" viewBox="0 0 3 3"><path d="M0 0 H2.9 L0 2.9Z" fill="#1f8a3a"/></svg>
<div class="cell" style="left:331.90px;top:79.47px;width:38.95px"><span style="display:inline-block;transform:scaleX(0.900);transform-origin:0 0">BEP</span></div>
<div class="cell" style="left:372.65px;top:79.47px;width:74.95px"><span style="display:inline-block;transform:scaleX(0.990);transform-origin:0 0">Chargé d&#x27;accueil</span></div>
<div class="cell" style="left:448.0px;top:79.47px;width:53.50px;text-align:right"><span style="display:inline-block;transform:scaleX(0.956);transform-origin:100% 0">18 000,00 €</span></div>
<div class="cell" style="left:14.60px;top:88.94px;width:39.40px"><span style="display:inline-block;transform:scaleX(0.900);transform-origin:0 0">BERNARD</span></div>
<div class="cell" style="left:55.80px;top:88.94px;width:39.30px"><span style="display:inline-block;transform:scaleX(0.974);transform-origin:0 0">Adam</span></div>
<div class="cell" style="left:96.90px;top:88.94px;width:63.70px"><span style="display:inline-block;transform:scaleX(0.980);transform-origin:0 0">20 rue de Paris</span></div>
<div class="cell" style="left:208.40px;top:88.94px;width:39.95px"><span style="display:inline-block;transform:scaleX(0.978);transform-origin:0 0">Colmar</span></div>
<div class="cell" style="left:248.75px;top:88.94px;width:39.20px;text-align:right"><span style="display:inline-block;transform:scaleX(0.940);transform-origin:100% 0">25</span></div>
<div class="cell" style="left:290.65px;top:88.94px;width:39.45px"><span style="display:inline-block;transform:scaleX(0.940);transform-origin:0 0">000002</span></div>
<svg class="ab" style="left:289.65px;top:86.44px" width="3" height="3" viewBox="0 0 3 3"><path d="M0 0 H2.9 L0 2.9Z" fill="#1f8a3a"/></svg>
<div class="cell" style="left:331.90px;top:88.94px;width:38.95px"><span style="display:inline-block;transform:scaleX(0.973);transform-origin:0 0">Master</span></div>
<div class="cell" style="left:372.65px;top:88.94px;width:74.95px"><span style="display:inline-block;transform:scaleX(0.994);transform-origin:0 0">Responsable commercial</span></div>
<div class="cell" style="left:448.0px;top:88.94px;width:53.50px;text-align:right"><span style="display:inline-block;transform:scaleX(0.956);transform-origin:100% 0">42 000,00 €</span></div>
<div class="cell" style="left:14.60px;top:98.41px;width:39.40px"><span style="display:inline-block;transform:scaleX(0.900);transform-origin:0 0">THOMAS</span></div>
<div class="cell" style="left:55.80px;top:98.41px;width:39.30px"><span style="display:inline-block;transform:scaleX(0.981);transform-origin:0 0">Raphael</span></div>
<div class="cell" style="left:96.90px;top:98.41px;width:63.70px"><span style="display:inline-block;transform:scaleX(0.980);transform-origin:0 0">12 rue de Madrid</span></div>
<div class="cell" style="left:208.40px;top:98.41px;width:39.95px"><span style="display:inline-block;transform:scaleX(0.971);transform-origin:0 0">Paris</span></div>
<div class="cell" style="left:248.75px;top:98.41px;width:39.20px;text-align:right"><span style="display:inline-block;transform:scaleX(0.940);transform-origin:100% 0">32</span></div>
<div class="cell" style="left:290.65px;top:98.41px;width:39.45px"><span style="display:inline-block;transform:scaleX(0.940);transform-origin:0 0">000003</span></div>
<svg class="ab" style="left:289.65px;top:95.91px" width="3" height="3" viewBox="0 0 3 3"><path d="M0 0 H2.9 L0 2.9Z" fill="#1f8a3a"/></svg>
<div class="cell" style="left:331.90px;top:98.41px;width:38.95px"><span style="display:inline-block;transform:scaleX(0.984);transform-origin:0 0">Licence</span></div>
<div class="cell" style="left:372.65px;top:98.41px;width:74.95px"><span style="display:inline-block;transform:scaleX(0.982);transform-origin:0 0">Webmaster</span></div>
<div class="cell" style="left:448.0px;top:98.41px;width:53.50px;text-align:right"><span style="display:inline-block;transform:scaleX(0.956);transform-origin:100% 0">22 000,00 €</span></div>
<div class="cell" style="left:14.60px;top:107.88px;width:39.40px"><span style="display:inline-block;transform:scaleX(0.900);transform-origin:0 0">PETIT</span></div>
<div class="cell" style="left:55.80px;top:107.88px;width:39.30px"><span style="display:inline-block;transform:scaleX(0.977);transform-origin:0 0">Louis</span></div>
<div class="cell" style="left:96.90px;top:107.88px;width:63.70px"><span style="display:inline-block;transform:scaleX(0.990);transform-origin:0 0">25 rue de porto</span></div>
<div class="cell" style="left:208.40px;top:107.88px;width:39.95px"><span style="display:inline-block;transform:scaleX(0.971);transform-origin:0 0">Paris</span></div>
<div class="cell" style="left:248.75px;top:107.88px;width:39.20px;text-align:right"><span style="display:inline-block;transform:scaleX(0.940);transform-origin:100% 0">19</span></div>
<div class="cell" style="left:290.65px;top:107.88px;width:39.45px"><span style="display:inline-block;transform:scaleX(0.940);transform-origin:0 0">000004</span></div>
<svg class="ab" style="left:289.65px;top:105.38px" width="3" height="3" viewBox="0 0 3 3"><path d="M0 0 H2.9 L0 2.9Z" fill="#1f8a3a"/></svg>
<div class="cell" style="left:331.90px;top:107.88px;width:38.95px"><span style="display:inline-block;transform:scaleX(0.906);transform-origin:0 0">BAC PRO</span></div>
<div class="cell" style="left:372.65px;top:107.88px;width:74.95px"><span style="display:inline-block;transform:scaleX(0.986);transform-origin:0 0">Commercial</span></div>
<div class="cell" style="left:448.0px;top:107.88px;width:53.50px;text-align:right"><span style="display:inline-block;transform:scaleX(0.956);transform-origin:100% 0">20 000,00 €</span></div>
<div class="cell" style="left:14.60px;top:117.35px;width:39.40px"><span style="display:inline-block;transform:scaleX(0.900);transform-origin:0 0">ROBERT</span></div>
<div class="cell" style="left:55.80px;top:117.35px;width:39.30px"><span style="display:inline-block;transform:scaleX(0.976);transform-origin:0 0">Arthur</span></div>
<div class="cell" style="left:96.90px;top:117.35px;width:63.70px"><span style="display:inline-block;transform:scaleX(0.982);transform-origin:0 0">35 rue de l&#x27;Arbre</span></div>
<div class="cell" style="left:208.40px;top:117.35px;width:39.95px"><span style="display:inline-block;transform:scaleX(0.974);transform-origin:0 0">Lyon</span></div>
<div class="cell" style="left:248.75px;top:117.35px;width:39.20px;text-align:right"><span style="display:inline-block;transform:scaleX(0.940);transform-origin:100% 0">26</span></div>
<div class="cell" style="left:290.65px;top:117.35px;width:39.45px"><span style="display:inline-block;transform:scaleX(0.940);transform-origin:0 0">000005</span></div>
<svg class="ab" style="left:289.65px;top:114.85px" width="3" height="3" viewBox="0 0 3 3"><path d="M0 0 H2.9 L0 2.9Z" fill="#1f8a3a"/></svg>
<div class="cell" style="left:331.90px;top:117.35px;width:38.95px"><span style="display:inline-block;transform:scaleX(0.904);transform-origin:0 0">BAC GENERAL</span></div>
<div class="cell" style="left:372.65px;top:117.35px;width:74.95px"><span style="display:inline-block;transform:scaleX(0.986);transform-origin:0 0">Commercial</span></div>
<div class="cell" style="left:448.0px;top:117.35px;width:53.50px;text-align:right"><span style="display:inline-block;transform:scaleX(0.956);transform-origin:100% 0">25 000,00 €</span></div>
<div class="cell" style="left:14.60px;top:126.82px;width:39.40px"><span style="display:inline-block;transform:scaleX(0.900);transform-origin:0 0">RICHARD</span></div>
<div class="cell" style="left:55.80px;top:126.82px;width:39.30px"><span style="display:inline-block;transform:scaleX(0.974);transform-origin:0 0">Victor</span></div>
<div class="cell" style="left:96.90px;top:126.82px;width:63.70px"><span style="display:inline-block;transform:scaleX(0.992);transform-origin:0 0">10 chemin branston</span></div>
<div class="cell" style="left:208.40px;top:126.82px;width:39.95px"><span style="display:inline-block;transform:scaleX(0.981);transform-origin:0 0">Mulhouse</span></div>
<div class="cell" style="left:248.75px;top:126.82px;width:39.20px;text-align:right"><span style="display:inline-block;transform:scaleX(0.940);transform-origin:100% 0">28</span></div>
<div class="cell" style="left:290.65px;top:126.82px;width:39.45px"><span style="display:inline-block;transform:scaleX(0.940);transform-origin:0 0">000006</span></div>
<svg class="ab" style="left:289.65px;top:124.32px" width="3" height="3" viewBox="0 0 3 3"><path d="M0 0 H2.9 L0 2.9Z" fill="#1f8a3a"/></svg>
<div class="cell" style="left:331.90px;top:126.82px;width:38.95px"><span style="display:inline-block;transform:scaleX(0.900);transform-origin:0 0">DUT</span></div>
<div class="cell" style="left:372.65px;top:126.82px;width:74.95px"><span style="display:inline-block;transform:scaleX(0.986);transform-origin:0 0">Dévelopeur</span></div>
<div class="cell" style="left:448.0px;top:126.82px;width:53.50px;text-align:right"><span style="display:inline-block;transform:scaleX(0.956);transform-origin:100% 0">22 000,00 €</span></div>
<div class="cell" style="left:14.60px;top:136.29px;width:39.40px"><span style="display:inline-block;transform:scaleX(0.900);transform-origin:0 0">DURAND</span></div>
<div class="cell" style="left:55.80px;top:136.29px;width:39.30px"><span style="display:inline-block;transform:scaleX(0.981);transform-origin:0 0">Mohamed</span></div>
<div class="cell" style="left:96.90px;top:136.29px;width:63.70px"><span style="display:inline-block;transform:scaleX(0.984);transform-origin:0 0">2 rue Churchill</span></div>
<div class="cell" style="left:208.40px;top:136.29px;width:39.95px"><span style="display:inline-block;transform:scaleX(0.985);transform-origin:0 0">Toulouse</span></div>
<div class="cell" style="left:248.75px;top:136.29px;width:39.20px;text-align:right"><span style="display:inline-block;transform:scaleX(0.940);transform-origin:100% 0">45</span></div>
<div class="cell" style="left:290.65px;top:136.29px;width:39.45px"><span style="display:inline-block;transform:scaleX(0.940);transform-origin:0 0">000007</span></div>
<svg class="ab" style="left:289.65px;top:133.79px" width="3" height="3" viewBox="0 0 3 3"><path d="M0 0 H2.9 L0 2.9Z" fill="#1f8a3a"/></svg>
<div class="cell" style="left:331.90px;top:136.29px;width:38.95px"><span style="display:inline-block;transform:scaleX(0.900);transform-origin:0 0">BTS</span></div>
<div class="cell" style="left:372.65px;top:136.29px;width:74.95px"><span style="display:inline-block;transform:scaleX(0.986);transform-origin:0 0">Dévelopeur</span></div>
<div class="cell" style="left:448.0px;top:136.29px;width:53.50px;text-align:right"><span style="display:inline-block;transform:scaleX(0.956);transform-origin:100% 0">35 000,00 €</span></div>
<div class="cell" style="left:14.60px;top:145.76px;width:39.40px"><span style="display:inline-block;transform:scaleX(0.900);transform-origin:0 0">DUBOIS</span></div>
<div class="cell" style="left:55.80px;top:145.76px;width:39.30px"><span style="display:inline-block;transform:scaleX(0.984);transform-origin:0 0">Joseph</span></div>
<div class="cell" style="left:96.90px;top:145.76px;width:63.70px"><span style="display:inline-block;transform:scaleX(0.977);transform-origin:0 0">10 rue Chirac</span></div>
<div class="cell" style="left:208.40px;top:145.76px;width:39.95px"><span style="display:inline-block;transform:scaleX(0.981);transform-origin:0 0">Grenoble</span></div>
<div class="cell" style="left:248.75px;top:145.76px;width:39.20px;text-align:right"><span style="display:inline-block;transform:scaleX(0.940);transform-origin:100% 0">59</span></div>
<div class="cell" style="left:290.65px;top:145.76px;width:39.45px"><span style="display:inline-block;transform:scaleX(0.940);transform-origin:0 0">000008</span></div>
<svg class="ab" style="left:289.65px;top:143.26px" width="3" height="3" viewBox="0 0 3 3"><path d="M0 0 H2.9 L0 2.9Z" fill="#1f8a3a"/></svg>
<div class="cell" style="left:331.90px;top:145.76px;width:38.95px"><span style="display:inline-block;transform:scaleX(0.900);transform-origin:0 0">BTS</span></div>
<div class="cell" style="left:372.65px;top:145.76px;width:74.95px"><span style="display:inline-block;transform:scaleX(0.986);transform-origin:0 0">Dévelopeur</span></div>
<div class="cell" style="left:448.0px;top:145.76px;width:53.50px;text-align:right"><span style="display:inline-block;transform:scaleX(0.956);transform-origin:100% 0">40 000,00 €</span></div>
<div class="cell" style="left:14.60px;top:155.23px;width:39.40px"><span style="display:inline-block;transform:scaleX(0.900);transform-origin:0 0">MOREAU</span></div>
<div class="cell" style="left:55.80px;top:155.23px;width:39.30px"><span style="display:inline-block;transform:scaleX(0.988);transform-origin:0 0">Isaac</span></div>
<div class="cell" style="left:96.90px;top:155.23px;width:63.70px"><span style="display:inline-block;transform:scaleX(0.976);transform-origin:0 0">42 Avenue du Rhin</span></div>
<div class="cell" style="left:208.40px;top:155.23px;width:39.95px"><span style="display:inline-block;transform:scaleX(0.974);transform-origin:0 0">Lyon</span></div>
<div class="cell" style="left:248.75px;top:155.23px;width:39.20px;text-align:right"><span style="display:inline-block;transform:scaleX(0.940);transform-origin:100% 0">48</span></div>
<div class="cell" style="left:290.65px;top:155.23px;width:39.45px"><span style="display:inline-block;transform:scaleX(0.940);transform-origin:0 0">000009</span></div>
<svg class="ab" style="left:289.65px;top:152.73px" width="3" height="3" viewBox="0 0 3 3"><path d="M0 0 H2.9 L0 2.9Z" fill="#1f8a3a"/></svg>
<div class="cell" style="left:331.90px;top:155.23px;width:38.95px"><span style="display:inline-block;transform:scaleX(0.984);transform-origin:0 0">Licence</span></div>
<div class="cell" style="left:372.65px;top:155.23px;width:74.95px"><span style="display:inline-block;transform:scaleX(0.993);transform-origin:0 0">Responsable réseaux</span></div>
<div class="cell" style="left:448.0px;top:155.23px;width:53.50px;text-align:right"><span style="display:inline-block;transform:scaleX(0.956);transform-origin:100% 0">26 000,00 €</span></div>
<div class="cell" style="left:14.60px;top:164.70px;width:39.40px"><span style="display:inline-block;transform:scaleX(0.900);transform-origin:0 0">LAURENT</span></div>
<div class="cell" style="left:55.80px;top:164.70px;width:39.30px"><span style="display:inline-block;transform:scaleX(0.967);transform-origin:0 0">Léo</span></div>
<div class="cell" style="left:96.90px;top:164.70px;width:63.70px"><span style="display:inline-block;transform:scaleX(0.983);transform-origin:0 0">10 Place d&#x27;islande</span></div>
<div class="cell" style="left:208.40px;top:164.70px;width:39.95px"><span style="display:inline-block;transform:scaleX(0.981);transform-origin:0 0">Grenoble</span></div>
<div class="cell" style="left:248.75px;top:164.70px;width:39.20px;text-align:right"><span style="display:inline-block;transform:scaleX(0.940);transform-origin:100% 0">35</span></div>
<div class="cell" style="left:290.65px;top:164.70px;width:39.45px"><span style="display:inline-block;transform:scaleX(0.940);transform-origin:0 0">000010</span></div>
<svg class="ab" style="left:289.65px;top:162.20px" width="3" height="3" viewBox="0 0 3 3"><path d="M0 0 H2.9 L0 2.9Z" fill="#1f8a3a"/></svg>
<div class="cell" style="left:331.90px;top:164.70px;width:38.95px"><span style="display:inline-block;transform:scaleX(0.973);transform-origin:0 0">Master</span></div>
<div class="cell" style="left:372.65px;top:164.70px;width:74.95px"><span style="display:inline-block;transform:scaleX(0.997);transform-origin:0 0">Ingénieur réseaux</span></div>
<div class="cell" style="left:448.0px;top:164.70px;width:53.50px;text-align:right"><span style="display:inline-block;transform:scaleX(0.956);transform-origin:100% 0">32 000,00 €</span></div>
<div class="cell" style="left:14.60px;top:174.17px;width:39.40px"><span style="display:inline-block;transform:scaleX(0.900);transform-origin:0 0">SIMON</span></div>
<div class="cell" style="left:55.80px;top:174.17px;width:39.30px"><span style="display:inline-block;transform:scaleX(0.981);transform-origin:0 0">Louise</span></div>
<div class="cell" style="left:96.90px;top:174.17px;width:63.70px"><span style="display:inline-block;transform:scaleX(0.986);transform-origin:0 0">10 rue des Nénuphars</span></div>
<div class="cell" style="left:208.40px;top:174.17px;width:39.95px"><span style="display:inline-block;transform:scaleX(0.985);transform-origin:0 0">Toulouse</span></div>
<div class="cell" style="left:248.75px;top:174.17px;width:39.20px;text-align:right"><span style="display:inline-block;transform:scaleX(0.940);transform-origin:100% 0">39</span></div>
<div class="cell" style="left:290.65px;top:174.17px;width:39.45px"><span style="display:inline-block;transform:scaleX(0.940);transform-origin:0 0">000011</span></div>
<svg class="ab" style="left:289.65px;top:171.67px" width="3" height="3" viewBox="0 0 3 3"><path d="M0 0 H2.9 L0 2.9Z" fill="#1f8a3a"/></svg>
<div class="cell" style="left:331.90px;top:174.17px;width:38.95px"><span style="display:inline-block;transform:scaleX(0.973);transform-origin:0 0">Master</span></div>
<div class="cell" style="left:372.65px;top:174.17px;width:74.95px"><span style="display:inline-block;transform:scaleX(0.996);transform-origin:0 0">Ingénieur logiciel</span></div>
<div class="cell" style="left:448.0px;top:174.17px;width:53.50px;text-align:right"><span style="display:inline-block;transform:scaleX(0.956);transform-origin:100% 0">33 000,00 €</span></div>
<div class="cell" style="left:14.60px;top:183.64px;width:39.40px"><span style="display:inline-block;transform:scaleX(0.900);transform-origin:0 0">MICHEL</span></div>
<div class="cell" style="left:55.80px;top:183.64px;width:39.30px"><span style="display:inline-block;transform:scaleX(0.969);transform-origin:0 0">Alice</span></div>
<div class="cell" style="left:96.90px;top:183.64px;width:63.70px"><span style="display:inline-block;transform:scaleX(0.995);transform-origin:0 0">8 rue de l&#x27;étang</span></div>
<div class="cell" style="left:208.40px;top:183.64px;width:39.95px"><span style="display:inline-block;transform:scaleX(0.971);transform-origin:0 0">Paris</span></div>
<div class="cell" style="left:248.75px;top:183.64px;width:39.20px;text-align:right"><span style="display:inline-block;transform:scaleX(0.940);transform-origin:100% 0">50</span></div>
<div class="cell" style="left:290.65px;top:183.64px;width:39.45px"><span style="display:inline-block;transform:scaleX(0.940);transform-origin:0 0">000012</span></div>
<svg class="ab" style="left:289.65px;top:181.14px" width="3" height="3" viewBox="0 0 3 3"><path d="M0 0 H2.9 L0 2.9Z" fill="#1f8a3a"/></svg>
<div class="cell" style="left:331.90px;top:183.64px;width:38.95px"><span style="display:inline-block;transform:scaleX(0.900);transform-origin:0 0">BTS</span></div>
<div class="cell" style="left:372.65px;top:183.64px;width:74.95px"><span style="display:inline-block;transform:scaleX(0.986);transform-origin:0 0">Commercial</span></div>
<div class="cell" style="left:448.0px;top:183.64px;width:53.50px;text-align:right"><span style="display:inline-block;transform:scaleX(0.956);transform-origin:100% 0">25 000,00 €</span></div>
<div class="cell" style="left:14.60px;top:193.11px;width:39.40px"><span style="display:inline-block;transform:scaleX(0.900);transform-origin:0 0">LEFEBVRE</span></div>
<div class="cell" style="left:55.80px;top:193.11px;width:39.30px"><span style="display:inline-block;transform:scaleX(0.971);transform-origin:0 0">Alma</span></div>
<div class="cell" style="left:96.90px;top:193.11px;width:63.70px"><span style="display:inline-block;transform:scaleX(0.983);transform-origin:0 0">25 Place d&#x27;irlande</span></div>
<div class="cell" style="left:208.40px;top:193.11px;width:39.95px"><span style="display:inline-block;transform:scaleX(0.981);transform-origin:0 0">Grenoble</span></div>
<div class="cell" style="left:248.75px;top:193.11px;width:39.20px;text-align:right"><span style="display:inline-block;transform:scaleX(0.940);transform-origin:100% 0">51</span></div>
<div class="cell" style="left:290.65px;top:193.11px;width:39.45px"><span style="display:inline-block;transform:scaleX(0.940);transform-origin:0 0">000013</span></div>
<svg class="ab" style="left:289.65px;top:190.61px" width="3" height="3" viewBox="0 0 3 3"><path d="M0 0 H2.9 L0 2.9Z" fill="#1f8a3a"/></svg>
<div class="cell" style="left:331.90px;top:193.11px;width:38.95px"><span style="display:inline-block;transform:scaleX(0.900);transform-origin:0 0">BTS</span></div>
<div class="cell" style="left:372.65px;top:193.11px;width:74.95px"><span style="display:inline-block;transform:scaleX(0.994);transform-origin:0 0">Administrateur réseaux</span></div>
<div class="cell" style="left:448.0px;top:193.11px;width:53.50px;text-align:right"><span style="display:inline-block;transform:scaleX(0.956);transform-origin:100% 0">24 000,00 €</span></div>
<div class="cell" style="left:14.60px;top:202.58px;width:39.40px"><span style="display:inline-block;transform:scaleX(0.900);transform-origin:0 0">LEROY</span></div>
<div class="cell" style="left:55.80px;top:202.58px;width:39.30px"><span style="display:inline-block;transform:scaleX(0.967);transform-origin:0 0">Léa</span></div>
<div class="cell" style="left:96.90px;top:202.58px;width:63.70px"><span style="display:inline-block;transform:scaleX(0.995);transform-origin:0 0">5 rue des fleurs</span></div>
<div class="cell" style="left:208.40px;top:202.58px;width:39.95px"><span style="display:inline-block;transform:scaleX(0.985);transform-origin:0 0">Toulouse</span></div>
<div class="cell" style="left:248.75px;top:202.58px;width:39.20px;text-align:right"><span style="display:inline-block;transform:scaleX(0.940);transform-origin:100% 0">25</span></div>
<div class="cell" style="left:290.65px;top:202.58px;width:39.45px"><span style="display:inline-block;transform:scaleX(0.940);transform-origin:0 0">000014</span></div>
<svg class="ab" style="left:289.65px;top:200.08px" width="3" height="3" viewBox="0 0 3 3"><path d="M0 0 H2.9 L0 2.9Z" fill="#1f8a3a"/></svg>
<div class="cell" style="left:331.90px;top:202.58px;width:38.95px"><span style="display:inline-block;transform:scaleX(0.904);transform-origin:0 0">BAC GENERAL</span></div>
<div class="cell" style="left:372.65px;top:202.58px;width:74.95px"><span style="display:inline-block;transform:scaleX(0.986);transform-origin:0 0">Commercial</span></div>
<div class="cell" style="left:448.0px;top:202.58px;width:53.50px;text-align:right"><span style="display:inline-block;transform:scaleX(0.956);transform-origin:100% 0">30 000,00 €</span></div>
<div class="cell" style="left:14.60px;top:212.05px;width:39.40px"><span style="display:inline-block;transform:scaleX(0.900);transform-origin:0 0">ROUX</span></div>
<div class="cell" style="left:55.80px;top:212.05px;width:39.30px"><span style="display:inline-block;transform:scaleX(0.977);transform-origin:0 0">Emma</span></div>
<div class="cell" style="left:96.90px;top:212.05px;width:63.70px"><span style="display:inline-block;transform:scaleX(0.984);transform-origin:0 0">10 Place napoléon</span></div>
<div class="cell" style="left:208.40px;top:212.05px;width:39.95px"><span style="display:inline-block;transform:scaleX(0.986);transform-origin:0 0">Strasbourg</span></div>
<div class="cell" style="left:248.75px;top:212.05px;width:39.20px;text-align:right"><span style="display:inline-block;transform:scaleX(0.940);transform-origin:100% 0">40</span></div>
<div class="cell" style="left:290.65px;top:212.05px;width:39.45px"><span style="display:inline-block;transform:scaleX(0.940);transform-origin:0 0">000015</span></div>
<svg class="ab" style="left:289.65px;top:209.55px" width="3" height="3" viewBox="0 0 3 3"><path d="M0 0 H2.9 L0 2.9Z" fill="#1f8a3a"/></svg>
<div class="cell" style="left:331.90px;top:212.05px;width:38.95px"><span style="display:inline-block;transform:scaleX(0.900);transform-origin:0 0">BTS</span></div>
<div class="cell" style="left:372.65px;top:212.05px;width:74.95px"><span style="display:inline-block;transform:scaleX(0.986);transform-origin:0 0">Dévelopeur</span></div>
<div class="cell" style="left:448.0px;top:212.05px;width:53.50px;text-align:right"><span style="display:inline-block;transform:scaleX(0.956);transform-origin:100% 0">23 500,00 €</span></div>
<div class="cell" style="left:14.60px;top:221.52px;width:39.40px"><span style="display:inline-block;transform:scaleX(0.900);transform-origin:0 0">DAVID</span></div>
<div class="cell" style="left:55.80px;top:221.52px;width:39.30px"><span style="display:inline-block;transform:scaleX(0.972);transform-origin:0 0">Chloé</span></div>
<div class="cell" style="left:96.90px;top:221.52px;width:63.70px"><span style="display:inline-block;transform:scaleX(0.992);transform-origin:0 0">12 rue de l&#x27;abricot</span></div>
<div class="cell" style="left:208.40px;top:221.52px;width:39.95px"><span style="display:inline-block;transform:scaleX(0.981);transform-origin:0 0">Grenoble</span></div>
<div class="cell" style="left:248.75px;top:221.52px;width:39.20px;text-align:right"><span style="display:inline-block;transform:scaleX(0.940);transform-origin:100% 0">20</span></div>
<div class="cell" style="left:290.65px;top:221.52px;width:39.45px"><span style="display:inline-block;transform:scaleX(0.940);transform-origin:0 0">000016</span></div>
<svg class="ab" style="left:289.65px;top:219.02px" width="3" height="3" viewBox="0 0 3 3"><path d="M0 0 H2.9 L0 2.9Z" fill="#1f8a3a"/></svg>
<div class="cell" style="left:331.90px;top:221.52px;width:38.95px"><span style="display:inline-block;transform:scaleX(0.906);transform-origin:0 0">BAC PRO</span></div>
<div class="cell" style="left:372.65px;top:221.52px;width:74.95px"><span style="display:inline-block;transform:scaleX(0.986);transform-origin:0 0">Commercial</span></div>
<div class="cell" style="left:448.0px;top:221.52px;width:53.50px;text-align:right"><span style="display:inline-block;transform:scaleX(0.956);transform-origin:100% 0">26 000,00 €</span></div>
<div class="cell" style="left:14.60px;top:230.99px;width:39.40px"><span style="display:inline-block;transform:scaleX(0.900);transform-origin:0 0">BERTRAND</span></div>
<div class="cell" style="left:55.80px;top:230.99px;width:39.30px"><span style="display:inline-block;transform:scaleX(0.985);transform-origin:0 0">Jeanne</span></div>
<div class="cell" style="left:96.90px;top:230.99px;width:63.70px"><span style="display:inline-block;transform:scaleX(0.986);transform-origin:0 0">1 rue de la Digue</span></div>
<div class="cell" style="left:208.40px;top:230.99px;width:39.95px"><span style="display:inline-block;transform:scaleX(0.971);transform-origin:0 0">Paris</span></div>
<div class="cell" style="left:248.75px;top:230.99px;width:39.20px;text-align:right"><span style="display:inline-block;transform:scaleX(0.940);transform-origin:100% 0">58</span></div>
<div class="cell" style="left:290.65px;top:230.99px;width:39.45px"><span style="display:inline-block;transform:scaleX(0.940);transform-origin:0 0">000017</span></div>
<svg class="ab" style="left:289.65px;top:228.49px" width="3" height="3" viewBox="0 0 3 3"><path d="M0 0 H2.9 L0 2.9Z" fill="#1f8a3a"/></svg>
<div class="cell" style="left:331.90px;top:230.99px;width:38.95px"><span style="display:inline-block;transform:scaleX(0.906);transform-origin:0 0">BAC PRO</span></div>
<div class="cell" style="left:372.65px;top:230.99px;width:74.95px"><span style="display:inline-block;transform:scaleX(0.985);transform-origin:0 0">Manutention</span></div>
<div class="cell" style="left:448.0px;top:230.99px;width:53.50px;text-align:right"><span style="display:inline-block;transform:scaleX(0.956);transform-origin:100% 0">18 000,00 €</span></div>
<div class="cell" style="left:14.60px;top:240.46px;width:39.40px"><span style="display:inline-block;transform:scaleX(0.900);transform-origin:0 0">MOREL</span></div>
<div class="cell" style="left:55.80px;top:240.46px;width:39.30px"><span style="display:inline-block;transform:scaleX(0.971);transform-origin:0 0">Anna</span></div>
<div class="cell" style="left:96.90px;top:240.46px;width:63.70px"><span style="display:inline-block;transform:scaleX(0.996);transform-origin:0 0">9 rue de l&#x27;arrosoir</span></div>
<div class="cell" style="left:208.40px;top:240.46px;width:39.95px"><span style="display:inline-block;transform:scaleX(0.986);transform-origin:0 0">Strasbourg</span></div>
<div class="cell" style="left:248.75px;top:240.46px;width:39.20px;text-align:right"><span style="display:inline-block;transform:scaleX(0.940);transform-origin:100% 0">35</span></div>
<div class="cell" style="left:290.65px;top:240.46px;width:39.45px"><span style="display:inline-block;transform:scaleX(0.940);transform-origin:0 0">000018</span></div>
<svg class="ab" style="left:289.65px;top:237.96px" width="3" height="3" viewBox="0 0 3 3"><path d="M0 0 H2.9 L0 2.9Z" fill="#1f8a3a"/></svg>
<div class="cell" style="left:331.90px;top:240.46px;width:38.95px"><span style="display:inline-block;transform:scaleX(0.973);transform-origin:0 0">Master</span></div>
<div class="cell" style="left:372.65px;top:240.46px;width:74.95px"><span style="display:inline-block;transform:scaleX(0.992);transform-origin:0 0">Contrôleur de gestion</span></div>
<div class="cell" style="left:448.0px;top:240.46px;width:53.50px;text-align:right"><span style="display:inline-block;transform:scaleX(0.956);transform-origin:100% 0">32 000,00 €</span></div>
<div class="cell" style="left:14.60px;top:249.93px;width:39.40px"><span style="display:inline-block;transform:scaleX(0.900);transform-origin:0 0">FOURNIER</span></div>
<div class="cell" style="left:55.80px;top:249.93px;width:39.30px"><span style="display:inline-block;transform:scaleX(0.969);transform-origin:0 0">Rose</span></div>
<div class="cell" style="left:96.90px;top:249.93px;width:63.70px"><span style="display:inline-block;transform:scaleX(0.991);transform-origin:0 0">10 rue de l&#x27;aigle</span></div>
<div class="cell" style="left:208.40px;top:249.93px;width:39.95px"><span style="display:inline-block;transform:scaleX(0.981);transform-origin:0 0">Mulhouse</span></div>
<div class="cell" style="left:248.75px;top:249.93px;width:39.20px;text-align:right"><span style="display:inline-block;transform:scaleX(0.940);transform-origin:100% 0">32</span></div>
<div class="cell" style="left:290.65px;top:249.93px;width:39.45px"><span style="display:inline-block;transform:scaleX(0.940);transform-origin:0 0">000019</span></div>
<svg class="ab" style="left:289.65px;top:247.43px" width="3" height="3" viewBox="0 0 3 3"><path d="M0 0 H2.9 L0 2.9Z" fill="#1f8a3a"/></svg>
<div class="cell" style="left:331.90px;top:249.93px;width:38.95px"><span style="display:inline-block;transform:scaleX(0.984);transform-origin:0 0">Licence</span></div>
<div class="cell" style="left:372.65px;top:249.93px;width:74.95px"><span style="display:inline-block;transform:scaleX(0.996);transform-origin:0 0">Ingénieur web</span></div>
<div class="cell" style="left:448.0px;top:249.93px;width:53.50px;text-align:right"><span style="display:inline-block;transform:scaleX(0.956);transform-origin:100% 0">28 000,00 €</span></div>
<div class="cell" style="left:14.60px;top:259.40px;width:39.40px"><span style="display:inline-block;transform:scaleX(0.900);transform-origin:0 0">GIRARD</span></div>
<div class="cell" style="left:55.80px;top:259.40px;width:39.30px"><span style="display:inline-block;transform:scaleX(0.971);transform-origin:0 0">Lina</span></div>
<div class="cell" style="left:96.90px;top:259.40px;width:63.70px"><span style="display:inline-block;transform:scaleX(0.993);transform-origin:0 0">15 rue de l&#x27;université</span></div>
<div class="cell" style="left:208.40px;top:259.40px;width:39.95px"><span style="display:inline-block;transform:scaleX(0.978);transform-origin:0 0">Colmar</span></div>
<div class="cell" style="left:248.75px;top:259.40px;width:39.20px;text-align:right"><span style="display:inline-block;transform:scaleX(0.940);transform-origin:100% 0">25</span></div>
<div class="cell" style="left:290.65px;top:259.40px;width:39.45px"><span style="display:inline-block;transform:scaleX(0.940);transform-origin:0 0">000020</span></div>
<svg class="ab" style="left:289.65px;top:256.90px" width="3" height="3" viewBox="0 0 3 3"><path d="M0 0 H2.9 L0 2.9Z" fill="#1f8a3a"/></svg>
<div class="cell" style="left:331.90px;top:259.40px;width:38.95px"><span style="display:inline-block;transform:scaleX(0.900);transform-origin:0 0">DUT</span></div>
<div class="cell" style="left:372.65px;top:259.40px;width:74.95px"><span style="display:inline-block;transform:scaleX(0.985);transform-origin:0 0">Comptable</span></div>
<div class="cell" style="left:448.0px;top:259.40px;width:53.50px;text-align:right"><span style="display:inline-block;transform:scaleX(0.956);transform-origin:100% 0">25 000,00 €</span></div>
<svg class="ab" style="left:502.5px;top:262.87px" width="3" height="3" viewBox="0 0 3 3"><path d="M3 0 V3 H0Z" fill="#4472c4"/></svg>
<svg class="ab" style="left:329.9px;top:67.0px" width="1" height="310.0"><line x1="0.5" y1="0" x2="0.5" y2="310.0" stroke="#b0b0b0" stroke-width="0.75" stroke-dasharray="1.1 1.3"/></svg>
<svg class="ab" style="left:628.7px;top:67.0px" width="1" height="310.0"><line x1="0.5" y1="0" x2="0.5" y2="310.0" stroke="#b0b0b0" stroke-width="0.75" stroke-dasharray="1.1 1.3"/></svg>
<div class="ab" style="left:546.0px;top:227.7px;width:42.9px;height:10.4px;border:1.15px solid #3d8d60;border-radius:0.5px"></div>
<div class="ab" style="left:587.3px;top:236.6px;width:2px;height:2px;background:#3d8d60"></div>
<div class="ab" style="left:749.3px;top:57.6px;width:9.70px;height:319.4px;background:#efebe7"></div>
<div class="ab" style="left:749.8px;top:57.8px;width:8px;height:319.1px;background:#fafafa;border-radius:4px"></div>
<svg class="ab" style="left:751.3px;top:60.3px" width="5.4" height="3.6" viewBox="0 0 6 4"><path d="M0.3 3.7 H5.7 L3 0.3Z" fill="#555"/></svg>
<div class="ab" style="left:752.2px;top:65.7px;width:3.9px;height:293.6px;background:#6a6a6a;border-radius:2px"></div>
<svg class="ab" style="left:751.3px;top:372.2px" width="5.4" height="3.6" viewBox="0 0 6 4"><path d="M0.3 0.3 H5.7 L3 3.7Z" fill="#555"/></svg>
<div class="ab" style="left:0;top:377.0px;width:759px;height:15.60px;background:#eee9e5"></div>
<svg class="ab" style="left:11.5px;top:381px" width="6" height="7" viewBox="0 0 6 7"><path d="M4 0.8 L1.6 3.5 L4 6.2" fill="none" stroke="#555" stroke-width="0.7"/></svg>
<svg class="ab" style="left:27px;top:381px" width="6" height="7" viewBox="0 0 6 7"><path d="M2 0.8 L4.4 3.5 L2 6.2" fill="none" stroke="#aaa" stroke-width="0.7"/></svg>
<svg class="ab" style="left:42px;top:382px" width="8" height="4" viewBox="0 0 8 4"><circle cx="1.4" cy="2" r="0.75" fill="#333"/><circle cx="3.8" cy="2" r="0.75" fill="#333"/><circle cx="6.2" cy="2" r="0.75" fill="#333"/></svg>
<div class="t" style="left:59.75px;top:382.4px;font-size:6.6px;color:#3b3b3b;transform:scaleX(1);transform-origin:0 0">Feuil10</div>
<div class="ab" style="left:88.2px;top:380.6px;width:0.6px;height:8.2px;background:#e0dcd8"></div>
<div class="t" style="left:93.5px;top:382.4px;font-size:6.6px;color:#3b3b3b;transform:scaleX(1);transform-origin:0 0">Calendrier</div>
<div class="ab" style="left:131.2px;top:380.6px;width:0.6px;height:8.2px;background:#e0dcd8"></div>
<div class="t" style="left:139px;top:382.4px;font-size:6.6px;color:#3b3b3b;transform:scaleX(1);transform-origin:0 0">Base de données</div>
<div class="ab" style="left:197px;top:380.6px;width:0.6px;height:8.2px;background:#e0dcd8"></div>
<div class="t" style="left:202.8px;top:382.4px;font-size:6.6px;color:#3b3b3b;transform:scaleX(1);transform-origin:0 0">Feuil13</div>
<div class="ab" style="left:231.3px;top:380.6px;width:0.6px;height:8.2px;background:#e0dcd8"></div>
<div class="t" style="left:236.6px;top:382.4px;font-size:6.6px;color:#3b3b3b;transform:scaleX(1);transform-origin:0 0">Feuil14</div>
<div class="ab" style="left:265px;top:380.6px;width:0.6px;height:8.2px;background:#e0dcd8"></div>
<div class="t" style="left:270.8px;top:382.4px;font-size:6.6px;color:#3b3b3b;transform:scaleX(0.97);transform-origin:0 0">PRODUCTION</div>
<div class="ab" style="left:321px;top:380.6px;width:0.6px;height:8.2px;background:#e0dcd8"></div>
<div class="t" style="left:327px;top:382.4px;font-size:6.6px;color:#3b3b3b;transform:scaleX(0.92);transform-origin:0 0">EMPLOYES</div>
<div class="ab" style="left:366.3px;top:380.6px;width:0.6px;height:8.2px;background:#e0dcd8"></div>
<div class="ab" style="left:397px;top:380.6px;width:0.6px;height:8.2px;background:#e0dcd8"></div>
<div class="ab" style="left:369.2px;top:376.8px;width:26.8px;height:13.9px;background:#fff;border-radius:0 0 2px 2px"></div>
<div class="t" style="left:372.6px;top:381.3px;font-size:6.6px;color:#1a1a1a;-webkit-text-stroke:0.3px #1a1a1a;letter-spacing:0.15px">Feuil8</div>
<div class="ab" style="left:373px;top:388px;width:18.6px;height:1.1px;background:#4caa72;border-radius:0.5px"></div>
<svg class="ab" style="left:418.5px;top:381.4px" width="6" height="6" viewBox="0 0 6 6"><path d="M3 0.2 V5.8 M0.2 3 H5.8" stroke="#444" stroke-width="0.8"/></svg>
<svg class="ab" style="left:455.8px;top:381.8px" width="2.2" height="6" viewBox="0 0 2.2 6"><path d="M1.1 0 V6" stroke="#8a8a8a" stroke-width="1.6" stroke-dasharray="1 0.5"/></svg>
<div class="ab" style="left:465.3px;top:380.9px;width:284.2px;height:7.3px;background:#fafafa;border-radius:3.6px"></div>
<svg class="ab" style="left:466.8px;top:382.2px" width="4.2" height="5" viewBox="0 0 4 5"><path d="M3.6 0.3 V4.7 L0.4 2.5Z" fill="#555"/></svg>
<div class="ab" style="left:472.9px;top:382.5px;width:250.3px;height:4.1px;background:#6a6a6a;border-radius:2px"></div>
<svg class="ab" style="left:743.7px;top:382.2px" width="4.2" height="5" viewBox="0 0 4 5"><path d="M0.4 0.3 V4.7 L3.6 2.5Z" fill="#555"/></svg>
<div class="ab" style="left:0;top:392.2px;width:759px;height:10.7px;background:#f4f3f1"></div>
<div class="t" style="left:5.8px;top:396.2px;font-size:5.6px;color:#555">Prêt</div>
<svg class="ab" style="left:24.8px;top:394.4px" width="8" height="8" viewBox="0 0 8 8"><path d="M4 0.5 L4.9 1.6 L6.3 1.4 L6.5 2.8 L7.6 3.7 L6.7 4.8 L6.9 6.2 L5.5 6.3 L4.6 7.4 L3.5 6.6 L2.1 7 L1.8 5.6 L0.6 4.9 L1.3 3.7 L1 2.3 L2.4 2 Z" fill="none" stroke="#333" stroke-width="0.55"/><circle cx="4" cy="2.7" r="0.55" fill="#333"/><path d="M2.6 3.7 H5.4 M4 3.7 V5 L3.2 6.2 M4 5 L4.8 6.2" fill="none" stroke="#333" stroke-width="0.5"/></svg>
<div class="t" style="left:33.8px;top:396.2px;font-size:5.6px;color:#222;font-weight:bold;transform:scaleX(0.9);transform-origin:0 0">Accessibilité : consultez nos recommandations</div>
<div class="ab" style="left:611.8px;top:392.8px;width:19px;height:10px;background:#dfdcd9"></div>
<svg class="ab" style="left:617.5px;top:394.3px" width="8" height="7" viewBox="0 0 8 7"><rect x="0.5" y="0.5" width="7" height="6" fill="none" stroke="#555" stroke-width="0.6"/><path d="M0.5 2.5 H7.5 M0.5 4.5 H7.5 M2.8 0.5 V6.5 M5.2 0.5 V6.5" stroke="#555" stroke-width="0.5"/></svg>
<svg class="ab" style="left:637px;top:394.3px" width="8" height="7" viewBox="0 0 8 7"><rect x="0.5" y="0.5" width="7" height="6" fill="none" stroke="#555" stroke-width="0.6"/><rect x="2" y="0.5" width="4" height="6" fill="none" stroke="#555" stroke-width="0.5"/></svg>
<svg class="ab" style="left:657px;top:394.3px" width="8" height="7" viewBox="0 0 8 7"><rect x="0.5" y="0.5" width="7" height="6" fill="none" stroke="#555" stroke-width="0.6"/><path d="M3 0.5 V3 H5 V0.5" fill="none" stroke="#555" stroke-width="0.5"/></svg>
<div class="ab" style="left:674px;top:397.4px;width:3px;height:0.6px;background:#666"></div>
<div class="ab" style="left:680px;top:397.5px;width:49px;height:0.5px;background:#888"></div>
<div class="ab" style="left:704.3px;top:395px;width:1.4px;height:5.4px;background:#444"></div>
<div class="t" style="left:731.8px;top:394.3px;font-size:6px;color:#555">+</div>
<div class="t" style="left:742px;top:395.7px;font-size:5.3px;color:#444">100%</div>
<div class="ab" style="left:0;top:402.9px;width:759px;height:24.1px;background:#f4e6d1"></div>
<svg class="ab" style="left:9px;top:406px" width="18" height="16" viewBox="0 0 18 16">
<ellipse cx="3.8" cy="6.4" rx="2.9" ry="1.4" fill="#a9d0f3"/><circle cx="4.6" cy="5.2" r="2" fill="#a9d0f3"/>
<rect x="6.4" y="1.8" width="10.4" height="6.2" rx="3.1" fill="#fdfaf4"/>
<path d="M1.9 9.3 Q3.5 14.6 8.8 13.8 Q11.8 13.1 12.4 9.2 Q9.5 12.2 1.9 9.3Z" fill="#f08a1c"/>
<path d="M6.5 9.5 Q8 8.2 10.5 8.6 Q12 9 12.3 10 Z" fill="#f5b642"/>
<ellipse cx="9.8" cy="12" rx="3.3" ry="1.5" fill="#9cc7f0"/><circle cx="10.4" cy="10.9" r="1.5" fill="#9cc7f0"/>
</svg>
<div class="t" style="left:16.2px;top:409.3px;font-size:5.4px;color:#222;-webkit-text-stroke:0.1px #222">26°</div>
<div class="ab" style="left:373.2px;top:404.9px;width:13.5px;height:19.4px;background:#e9b9b3;border-radius:2px"></div>
<div class="ab" style="left:375px;top:422.9px;width:10px;height:1.3px;background:#c8281e;border-radius:0.6px"></div>
<div class="ab" style="left:531.8px;top:405.6px;width:12.7px;height:19px;background:#f9f2e8;border-radius:2px"></div>
<div class="ab" style="left:535.4px;top:422.9px;width:5.6px;height:1.3px;background:#8f6552;border-radius:0.6px"></div>
<svg class="ab" style="left:201.20px;top:410.60px" width="9" height="9" viewBox="0 0 9 9"><defs><linearGradient id="wg" x1="0" y1="0" x2="1" y2="1"><stop offset="0" stop-color="#5fc3f5"/><stop offset="1" stop-color="#1b7fd6"/></linearGradient></defs><rect x="0.6" y="0.6" width="3.75" height="3.75" fill="url(#wg)"/><rect x="4.65" y="0.6" width="3.75" height="3.75" fill="url(#wg)"/><rect x="0.6" y="4.65" width="3.75" height="3.75" fill="url(#wg)"/><rect x="4.65" y="4.65" width="3.75" height="3.75" fill="url(#wg)"/></svg>
<svg class="ab" style="left:216.60px;top:410.60px" width="9" height="9" viewBox="0 0 9 9"><circle cx="4" cy="4" r="2.6" fill="none" stroke="#222" stroke-width="0.9"/><line x1="5.9" y1="5.9" x2="8" y2="8" stroke="#222" stroke-width="1"/></svg>
<svg class="ab" style="left:232.00px;top:410.60px" width="9" height="9" viewBox="0 0 9 9"><rect x="3.3" y="1" width="5.2" height="5" rx="0.5" fill="#e8e8e8" stroke="#c8c8c8" stroke-width="0.3"/><rect x="0.6" y="3.4" width="5" height="4.8" rx="0.4" fill="#1e1e1e"/><rect x="1.6" y="4.2" width="3.2" height="3" fill="#fff" opacity="0.15"/></svg>
<svg class="ab" style="left:248.10px;top:410.60px" width="9" height="9" viewBox="0 0 9 9"><path d="M0.5 1 H3.5 L4.5 2 H8.5 V8.3 H0.5Z" fill="#e9a825"/><rect x="0.5" y="2.7" width="8" height="5.6" rx="0.4" fill="#fcd55c"/><rect x="2" y="5.6" width="5" height="1.3" rx="0.5" fill="#1f74d0"/></svg>
<svg class="ab" style="left:264.50px;top:410.60px" width="9" height="9" viewBox="0 0 9 9"><rect x="0.8" y="1.5" width="7.4" height="6.8" rx="0.8" fill="#1f5aa6"/><rect x="2.3" y="3" width="2" height="2" fill="#f25022"/><rect x="4.7" y="3" width="2" height="2" fill="#7fba00"/><rect x="2.3" y="5.3" width="2" height="2" fill="#00a4ef"/><rect x="4.7" y="5.3" width="2" height="2" fill="#ffb900"/></svg>
<svg class="ab" style="left:280.10px;top:410.60px" width="9" height="9" viewBox="0 0 9 9"><circle cx="4.5" cy="4.5" r="4.1" fill="#fffc00" stroke="#e0dc00" stroke-width="0.3"/><path d="M4.5 1.8 C3.3 1.8 2.8 2.7 2.8 3.8 V4.6 L2.1 4.9 L2.8 5.4 C2.6 6 2.2 6.3 1.8 6.5 L3.2 6.9 L4.5 7.4 L5.8 6.9 L7.2 6.5 C6.8 6.3 6.4 6 6.2 5.4 L6.9 4.9 L6.2 4.6 V3.8 C6.2 2.7 5.7 1.8 4.5 1.8Z" fill="#fff" stroke="#222" stroke-width="0.35"/><circle cx="8.3" cy="0.7" r="0.7" fill="#c0392b"/></svg>
<svg class="ab" style="left:296.00px;top:410.60px" width="9" height="9" viewBox="0 0 9 9"><circle cx="4.5" cy="4.5" r="4" fill="#111"/><path d="M4.8 2 V5.6 A1.2 1.2 0 1 1 3.6 4.4 M4.8 2 Q5.4 3.2 6.4 3.2" fill="none" stroke="#fff" stroke-width="0.7"/></svg>
<svg class="ab" style="left:311.90px;top:410.60px" width="9" height="9" viewBox="0 0 9 9"><path d="M3.2 1.6 H4.2 L5.3 5.2 V1.6 H6.1 V7.6 H5.1 L4 4 V7.6 H3.2Z" fill="#d8141c"/></svg>
<svg class="ab" style="left:327.50px;top:410.60px" width="9" height="9" viewBox="0 0 9 9"><rect x="0.8" y="0.8" width="7.4" height="7.4" rx="1" fill="#0a66c2"/><text x="4.6" y="7" font-size="5" fill="#fff" text-anchor="middle" font-family="Liberation Sans" font-weight="bold">in</text></svg>
<svg class="ab" style="left:343.50px;top:410.60px" width="9" height="9" viewBox="0 0 9 9"><circle cx="4.5" cy="4.5" r="3.6" fill="none" stroke="#444" stroke-width="0.8"/><circle cx="4.5" cy="4.5" r="1.7" fill="none" stroke="#444" stroke-width="0.7"/></svg>
<svg class="ab" style="left:359.30px;top:410.60px" width="9" height="9" viewBox="0 0 9 9"><rect x="0.6" y="0.6" width="7.8" height="7.8" rx="0.5" fill="#1f1f1f"/><circle cx="4.5" cy="4.5" r="1.3" fill="#e8e8e8"/><path d="M4.5 2.4 V6.6 M2.4 4.5 H6.6" stroke="#e8e8e8" stroke-width="0.5"/></svg>
<svg class="ab" style="left:375.50px;top:410.60px" width="9" height="9" viewBox="0 0 9 9"><circle cx="4.5" cy="4.5" r="4" fill="#2aa3e0"/><path d="M2 4.5 L7 2.5 L6 7 L4.3 5.6 Z" fill="#fff"/><circle cx="8.2" cy="0.8" r="0.7" fill="#c0392b"/></svg>
<svg class="ab" style="left:391.30px;top:410.60px" width="9" height="9" viewBox="0 0 9 9"><rect x="0.8" y="1" width="7.4" height="5.5" rx="0.6" fill="#1a8ad8"/><rect x="3.3" y="6.5" width="2.4" height="1.8" fill="#0f5fa8"/></svg>
<svg class="ab" style="left:407.10px;top:410.60px" width="9" height="9" viewBox="0 0 9 9"><circle cx="4.5" cy="4.5" r="4" fill="#db4437"/><path d="M4.5 4.5 L8.2 3 A4 4 0 0 1 5.5 8.4Z" fill="#f4b400"/><path d="M4.5 4.5 L5.5 8.4 A4 4 0 0 1 0.8 3Z" fill="#0f9d58"/><circle cx="4.5" cy="4.5" r="1.8" fill="#fff"/><circle cx="4.5" cy="4.5" r="1.4" fill="#4285f4"/></svg>
<svg class="ab" style="left:423.00px;top:410.60px" width="9" height="9" viewBox="0 0 9 9"><circle cx="4.5" cy="4.5" r="3.6" fill="#fff" stroke="#2bb741" stroke-width="0.9"/><path d="M3.2 3 Q3.5 5.5 6 6" fill="none" stroke="#2bb741" stroke-width="0.8"/><circle cx="8.2" cy="0.8" r="0.7" fill="#c0392b"/></svg>
<svg class="ab" style="left:438.80px;top:410.60px" width="9" height="9" viewBox="0 0 9 9"><circle cx="4.5" cy="4.5" r="4" fill="#1ed760"/><path d="M2.3 3.5 Q4.5 2.8 6.8 3.9 M2.6 4.9 Q4.5 4.4 6.3 5.3 M2.9 6.2 Q4.5 5.8 5.9 6.5" fill="none" stroke="#111" stroke-width="0.5"/></svg>
<svg class="ab" style="left:454.50px;top:410.60px" width="9" height="9" viewBox="0 0 9 9"><circle cx="4.5" cy="4.5" r="4" fill="#fff"/><circle cx="4.5" cy="4.5" r="3" fill="#5b8ef7"/><path d="M2.5 5.5 L3.8 3.8 L5 4.8 L6.5 3.5 L5.2 5.2 L4 4.2Z" fill="#fff"/></svg>
<svg class="ab" style="left:470.40px;top:410.60px" width="9" height="9" viewBox="0 0 9 9"><rect x="2.3" y="0.6" width="4.4" height="7.8" rx="0.6" fill="#3a9ee0"/><rect x="2.8" y="1.2" width="3.4" height="6.2" fill="#62bdf0"/><rect x="2.3" y="7.8" width="4.4" height="0.6" fill="#e07a40"/></svg>
<svg class="ab" style="left:486.20px;top:410.60px" width="9" height="9" viewBox="0 0 9 9"><circle cx="4.5" cy="4.5" r="2.9" fill="none" stroke="#4a6890" stroke-width="1.4" stroke-dasharray="1.3 0.98"/><circle cx="4.5" cy="4.5" r="2.2" fill="none" stroke="#4a6890" stroke-width="0.6"/><circle cx="4.5" cy="4.5" r="1" fill="#2f7fe0"/></svg>
<svg class="ab" style="left:502.00px;top:410.60px" width="9" height="9" viewBox="0 0 9 9"><circle cx="4.5" cy="4.5" r="4" fill="#0c77d4"/><path d="M1 5 A3.5 3.5 0 0 1 8 4 Q8 6 5.5 6 Q3.5 6 4 4.5" fill="#47d49a"/><circle cx="5" cy="4.8" r="1.2" fill="#0c77d4"/></svg>
<svg class="ab" style="left:517.80px;top:410.60px" width="9" height="9" viewBox="0 0 9 9"><rect x="3" y="1" width="5.5" height="6.5" rx="0.6" fill="#0f6cbd"/><rect x="0.5" y="3" width="4.5" height="4.5" rx="0.5" fill="#0a4f94"/><circle cx="2.75" cy="5.25" r="1.2" fill="none" stroke="#fff" stroke-width="0.6"/></svg>
<svg class="ab" style="left:533.60px;top:410.60px" width="9" height="9" viewBox="0 0 9 9"><rect x="3" y="1" width="5.5" height="7" rx="0.6" fill="#21a366"/><rect x="3" y="1" width="5.5" height="2.3" rx="0.6" fill="#33c481"/><rect x="0.5" y="2.8" width="4.5" height="4.5" rx="0.5" fill="#107c41"/><path d="M1.6 3.9 L3.9 6.2 M3.9 3.9 L1.6 6.2" stroke="#fff" stroke-width="0.7"/></svg>
<svg class="ab" style="left:549.50px;top:410.60px" width="9" height="9" viewBox="0 0 9 9"><circle cx="4.5" cy="4.5" r="4" fill="#b0487a"/><circle cx="4.5" cy="4.5" r="3.4" fill="#222"/><path d="M3.6 2.7 V6.3 L6.4 4.5Z" fill="#fff"/></svg>
<svg class="ab" style="left:251.10px;top:422.2px" width="3" height="3" viewBox="0 0 3 3"><circle cx="1.5" cy="1.5" r="0.75" fill="#5a5a5a"/></svg>
<svg class="ab" style="left:267.50px;top:422.2px" width="3" height="3" viewBox="0 0 3 3"><circle cx="1.5" cy="1.5" r="0.75" fill="#5a5a5a"/></svg>
<svg class="ab" style="left:283.10px;top:422.2px" width="3" height="3" viewBox="0 0 3 3"><circle cx="1.5" cy="1.5" r="0.75" fill="#5a5a5a"/></svg>
<svg class="ab" style="left:299.00px;top:422.2px" width="3" height="3" viewBox="0 0 3 3"><circle cx="1.5" cy="1.5" r="0.75" fill="#5a5a5a"/></svg>
<svg class="ab" style="left:330.50px;top:422.2px" width="3" height="3" viewBox="0 0 3 3"><circle cx="1.5" cy="1.5" r="0.75" fill="#5a5a5a"/></svg>
<svg class="ab" style="left:346.50px;top:422.2px" width="3" height="3" viewBox="0 0 3 3"><circle cx="1.5" cy="1.5" r="0.75" fill="#5a5a5a"/></svg>
<svg class="ab" style="left:410.10px;top:422.2px" width="3" height="3" viewBox="0 0 3 3"><circle cx="1.5" cy="1.5" r="0.75" fill="#5a5a5a"/></svg>
<svg class="ab" style="left:426.00px;top:422.2px" width="3" height="3" viewBox="0 0 3 3"><circle cx="1.5" cy="1.5" r="0.75" fill="#5a5a5a"/></svg>
<svg class="ab" style="left:441.80px;top:422.2px" width="3" height="3" viewBox="0 0 3 3"><circle cx="1.5" cy="1.5" r="0.75" fill="#5a5a5a"/></svg>
<svg class="ab" style="left:457.50px;top:422.2px" width="3" height="3" viewBox="0 0 3 3"><circle cx="1.5" cy="1.5" r="0.75" fill="#5a5a5a"/></svg>
<svg class="ab" style="left:473.40px;top:422.2px" width="3" height="3" viewBox="0 0 3 3"><circle cx="1.5" cy="1.5" r="0.75" fill="#5a5a5a"/></svg>
<svg class="ab" style="left:489.20px;top:422.2px" width="3" height="3" viewBox="0 0 3 3"><circle cx="1.5" cy="1.5" r="0.75" fill="#5a5a5a"/></svg>
<svg class="ab" style="left:505.00px;top:422.2px" width="3" height="3" viewBox="0 0 3 3"><circle cx="1.5" cy="1.5" r="0.75" fill="#5a5a5a"/></svg>
<svg class="ab" style="left:520.80px;top:422.2px" width="3" height="3" viewBox="0 0 3 3"><circle cx="1.5" cy="1.5" r="0.75" fill="#5a5a5a"/></svg>
<svg class="ab" style="left:552.50px;top:422.2px" width="3" height="3" viewBox="0 0 3 3"><circle cx="1.5" cy="1.5" r="0.75" fill="#5a5a5a"/></svg>
<svg class="ab" style="left:624.6px;top:412.8px" width="7" height="5" viewBox="0 0 7 5"><path d="M0.9 3.9 L3.5 1.3 L6.1 3.9" fill="none" stroke="#333" stroke-width="0.95"/></svg>
<svg class="ab" style="left:638.8px;top:411.4px" width="10" height="7" viewBox="0 0 10 7"><defs><linearGradient id="cg" x1="0" y1="0" x2="0" y2="1"><stop offset="0" stop-color="#e6e6e6"/><stop offset="1" stop-color="#a9a9a9"/></linearGradient></defs><path d="M2.1 6.4 A2 2 0 0 1 1.9 2.6 A3.1 3.1 0 0 1 7.6 2.7 A1.9 1.9 0 0 1 7.9 6.4Z" fill="url(#cg)" stroke="#8a8a8a" stroke-width="0.45"/></svg>
<div class="t" style="left:654px;top:409px;width:17px;text-align:center;font-size:5.6px;color:#3a3a3a">FRA</div>
<div class="t" style="left:654px;top:416.9px;width:17px;text-align:center;font-size:5.6px;color:#3a3a3a">FR</div>
<svg class="ab" style="left:677.5px;top:412.6px" width="7" height="6" viewBox="0 0 7 6"><path d="M3.5 5.6 L0.3 2 Q3.5 -0.4 6.7 2 Z" fill="#777"/><path d="M1.3 2.2 Q3.5 0.7 5.7 2.2 M2.2 3.3 Q3.5 2.4 4.8 3.3" fill="none" stroke="#f4e6d1" stroke-width="0.35"/></svg>
<svg class="ab" style="left:688.6px;top:411.8px" width="8" height="7" viewBox="0 0 8 7"><path d="M0.6 2.4 H1.9 L3.8 0.8 V6.2 L1.9 4.6 H0.6Z" fill="none" stroke="#444" stroke-width="0.6"/><path d="M5.1 2.4 Q5.7 3.5 5.1 4.6 M6.1 1.6 Q7.2 3.5 6.1 5.4" fill="none" stroke="#444" stroke-width="0.55"/></svg>
<svg class="ab" style="left:700.4px;top:410.8px" width="11" height="8" viewBox="0 0 11 8"><rect x="0.4" y="2.2" width="10.2" height="4.6" rx="1.6" fill="#1f9a32" stroke="#1b3a1f" stroke-width="0.55"/><path d="M2.6 4.4 Q5 2.4 8.4 4.4" fill="none" stroke="#7ad37e" stroke-width="0.6"/><path d="M5.2 0.4 V3.6" stroke="#1b1b1b" stroke-width="0.7"/></svg>
<div class="t" style="left:715px;top:408.9px;width:34.4px;text-align:right;font-size:6.1px;color:#333">04:12</div>
<div class="t" style="left:705px;top:416.6px;width:44.4px;text-align:right;font-size:6.1px;color:#333">16/03/2026</div>
</body></html>
